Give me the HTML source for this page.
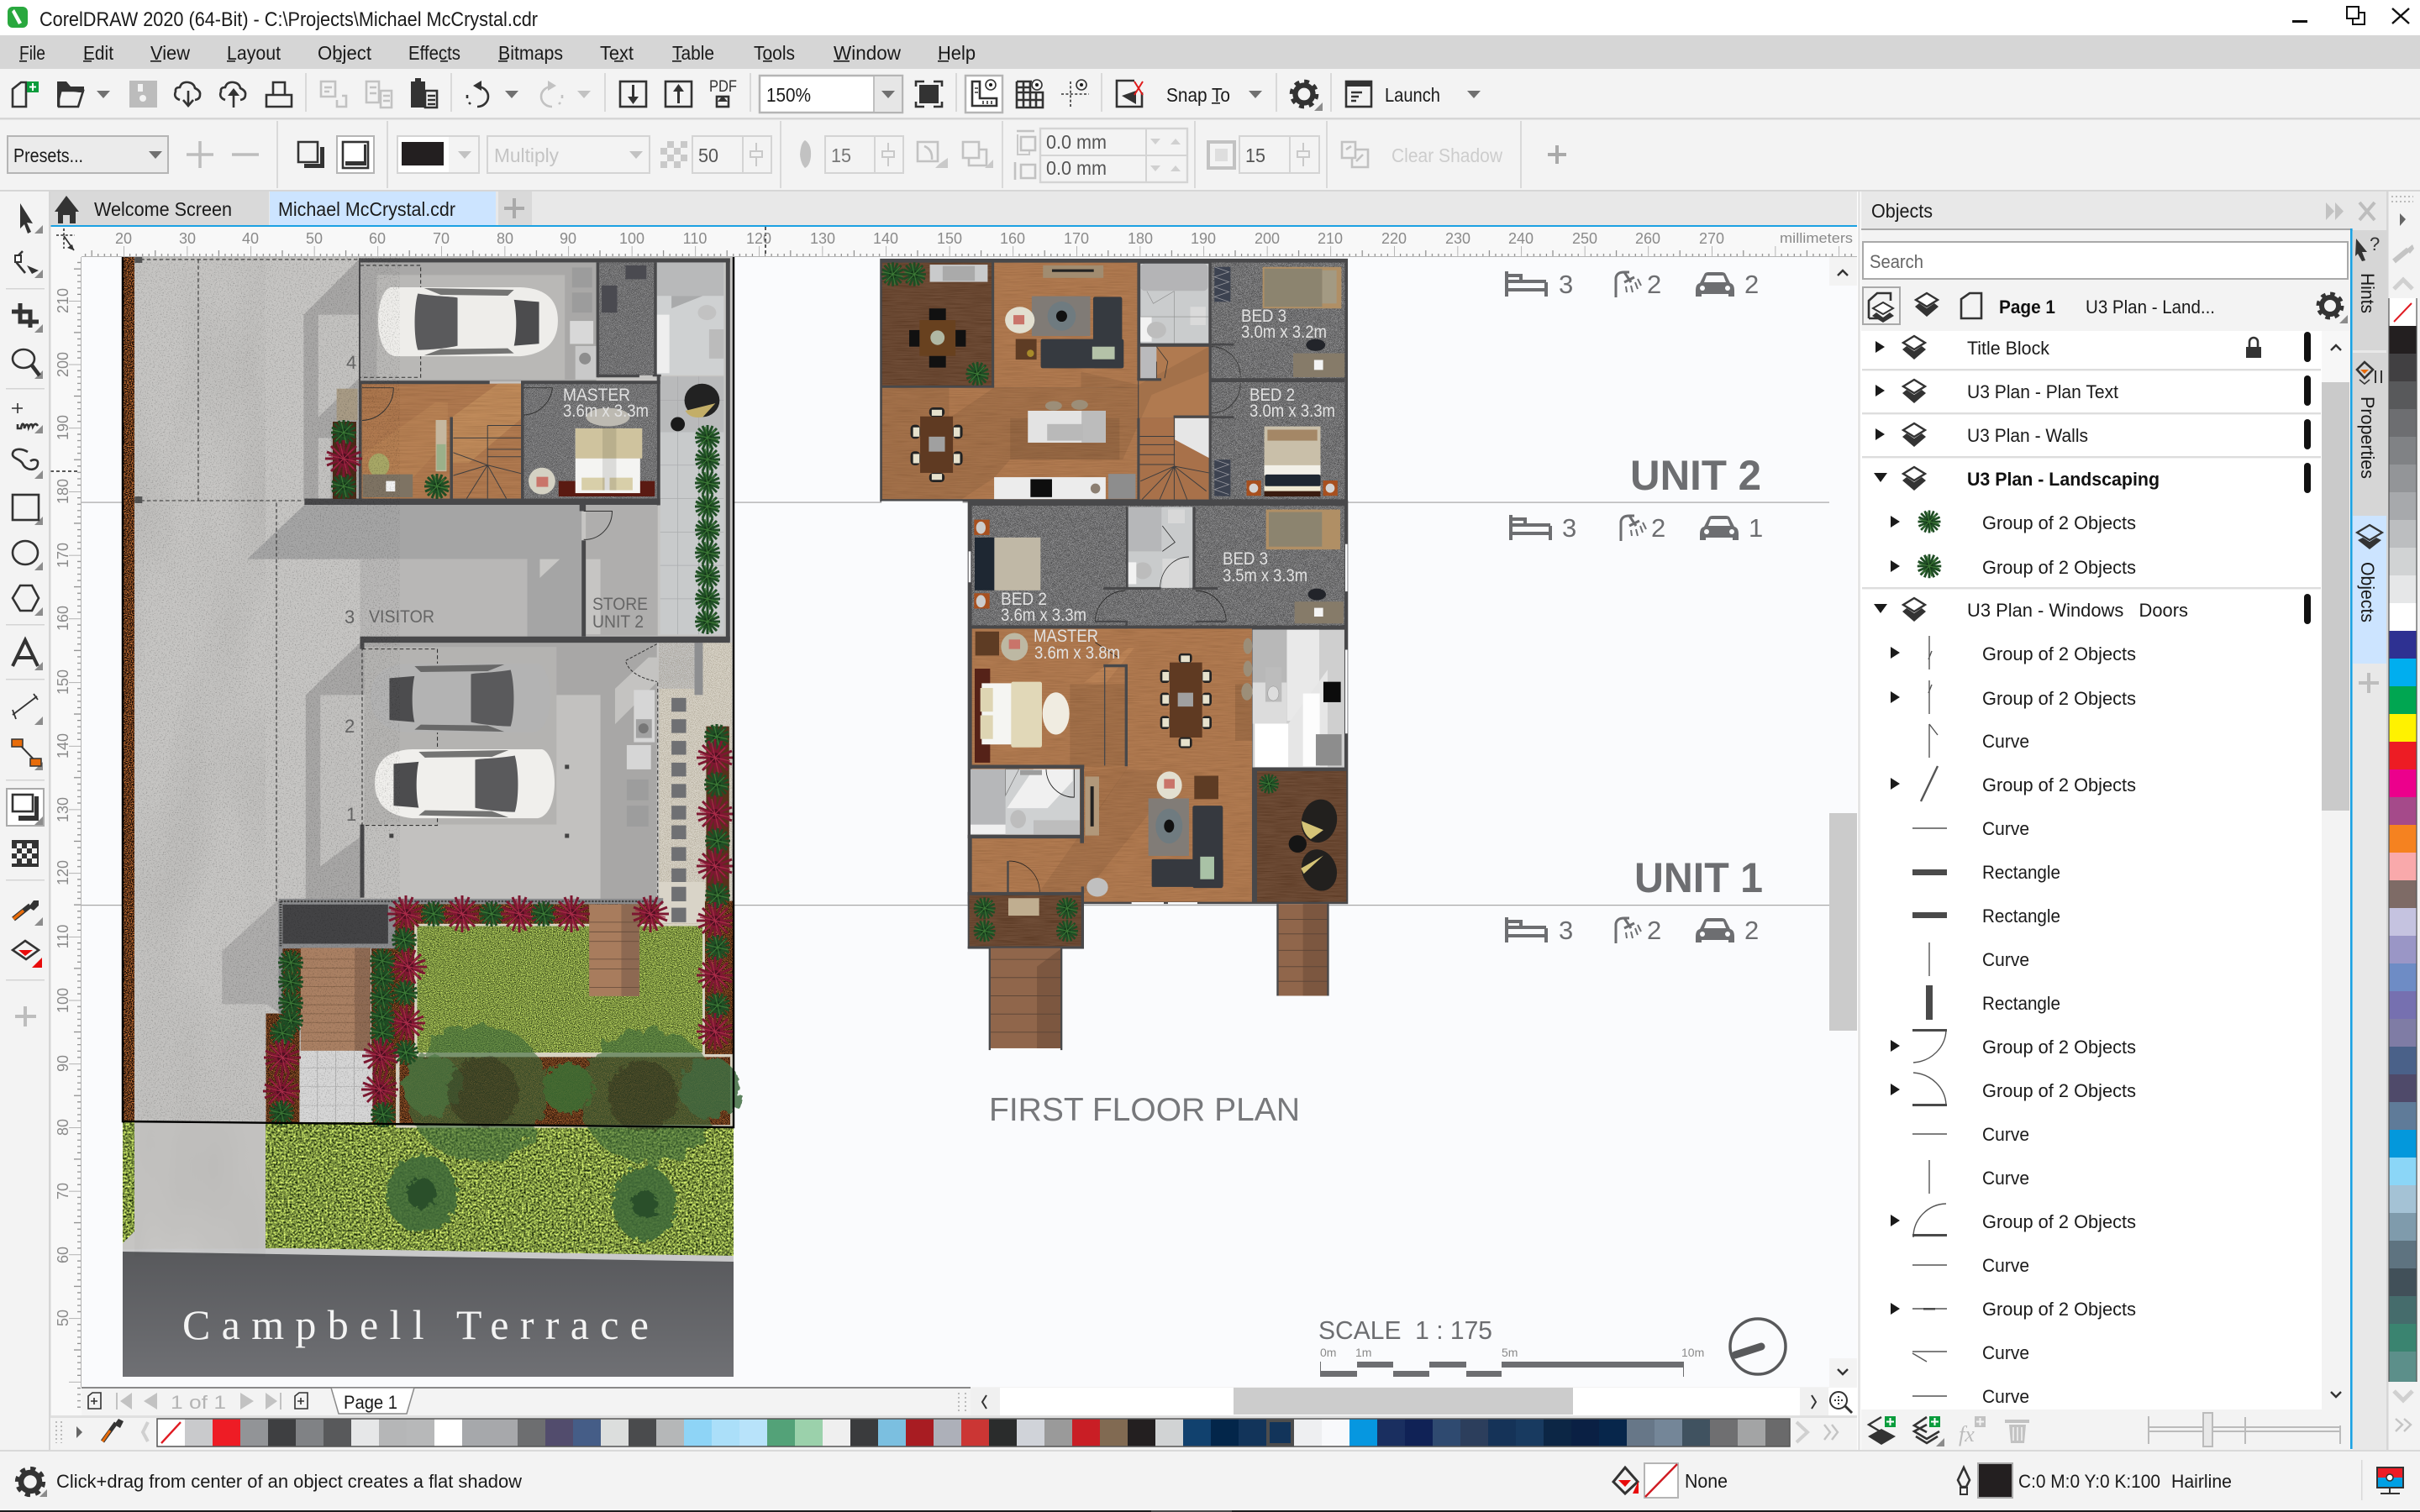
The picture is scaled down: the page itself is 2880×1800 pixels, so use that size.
<!DOCTYPE html>
<html><head><meta charset="utf-8"><title>CorelDRAW 2020</title>
<style>
html,body{margin:0;padding:0;background:#f3f3f3;overflow:hidden}
svg{display:block;font-family:"Liberation Sans",sans-serif;font-size:22px;fill:#1a1a1a}
.s{fill:none;stroke:#333;stroke-width:2.6}
.t{fill:none;stroke:#333;stroke-width:1.6}
.g{fill:none;stroke:#c2c2c2;stroke-width:2.6}
.d{fill:#333}
.dg{fill:#c2c2c2}
.tr{fill:#707070}
.r{fill:#8a8a8a;font-size:18px;text-anchor:middle}
.w{fill:#48484a}
.l{fill:#e2e2e2;font-size:21px}
</style></head><body>
<svg width="2880" height="1800" viewBox="0 0 2880 1800" xmlns="http://www.w3.org/2000/svg">
<defs>
<filter id="speck" x="0" y="0" width="100%" height="100%" color-interpolation-filters="sRGB"><feTurbulence type="fractalNoise" baseFrequency=".7" numOctaves="2" seed="3"/><feColorMatrix values="0 0 0 0 0 0 0 0 0 0 0 0 0 0 0 3.4 0 0 0 -1.8"/></filter>
<filter id="cloudy" x="0" y="0" width="100%" height="100%" color-interpolation-filters="sRGB"><feTurbulence type="fractalNoise" baseFrequency=".012 .004" numOctaves="2" seed="8"/><feColorMatrix values="0 0 0 0 0 0 0 0 0 0 0 0 0 0 0 1.6 0 0 0 -.62"/></filter>
<filter id="carpet" x="0" y="0" width="100%" height="100%" color-interpolation-filters="sRGB"><feTurbulence type="fractalNoise" baseFrequency="1.1" numOctaves="1" seed="5"/><feColorMatrix values="2.6 0 0 0 -.85 2.6 0 0 0 -.85 2.6 0 0 0 -.85 0 0 0 0 .38"/></filter>
<filter id="grass" x="0" y="0" width="100%" height="100%" color-interpolation-filters="sRGB"><feTurbulence type="fractalNoise" baseFrequency=".42" numOctaves="3" seed="11"/><feColorMatrix values="1.5 0 0 0 -.26 1.6 0 0 0 -.22 .8 0 0 0 -.15 0 0 0 0 1"/></filter>
<filter id="mulch" x="0" y="0" width="100%" height="100%" color-interpolation-filters="sRGB"><feTurbulence type="fractalNoise" baseFrequency=".8" numOctaves="2" seed="2"/><feColorMatrix values="2.2 0 0 0 -.72 1.3 0 0 0 -.44 .6 0 0 0 -.2 0 0 0 0 1"/></filter>
<filter id="grain" x="0" y="0" width="100%" height="100%" color-interpolation-filters="sRGB"><feTurbulence type="fractalNoise" baseFrequency=".012 .45" numOctaves="2" seed="6"/><feColorMatrix values="0 0 0 0 .2 0 0 0 0 .08 0 0 0 0 0 1.6 0 0 0 -.6"/></filter>
<filter id="gravel" x="0" y="0" width="100%" height="100%" color-interpolation-filters="sRGB"><feTurbulence type="fractalNoise" baseFrequency=".55" numOctaves="2" seed="9"/><feColorMatrix values="0 0 0 0 .35 0 0 0 0 .3 0 0 0 0 .2 2.4 0 0 0 -1.05"/></filter>
<filter id="leaf" x="-20%" y="-20%" width="140%" height="140%"><feTurbulence type="fractalNoise" baseFrequency=".07" numOctaves="3" seed="4" result="t"/><feDisplacementMap in="SourceGraphic" in2="t" scale="22"/></filter>
<filter id="leaf2" x="-30%" y="-30%" width="160%" height="160%"><feTurbulence type="fractalNoise" baseFrequency=".16" numOctaves="3" seed="7" result="t"/><feDisplacementMap in="SourceGraphic" in2="t" scale="14"/></filter>
<linearGradient id="road" x1="0" y1="0" x2="0" y2="1"><stop offset="0" stop-color="#58595c"/><stop offset="1" stop-color="#6f7074"/></linearGradient>
<pattern id="hr" x="147" y="290" width="75.6" height="16" patternUnits="userSpaceOnUse"><path d="M0 3V16M37.8 8V16M7.56 12V16M15.12 12V16M22.68 12V16M30.24 12V16M45.36 12V16M52.92 12V16M60.48 12V16M68.04 12V16" stroke="#8a8a8a" stroke-width="1.2" fill="none"/></pattern>
<pattern id="vr" x="80" y="358" width="16" height="75.7" patternUnits="userSpaceOnUse"><path d="M2 0H16M8 37.85H16M12 7.57H16M12 15.14H16M12 22.71H16M12 30.28H16M12 45.42H16M12 52.99H16M12 60.56H16M12 68.13H16" stroke="#8a8a8a" stroke-width="1.2" fill="none"/></pattern>
<clipPath id="cv"><rect x="97" y="306" width="2080" height="1345"/></clipPath>
<clipPath id="lst"><rect x="2215" y="394" width="548" height="1284"/></clipPath>
<g id="lay"><path d="M0-13L13-5L0 3L-13-5Z" fill="#fff" stroke="#333" stroke-width="2.4"/><path d="M-9-1L-14 3L0 15L14 3L9-1L0 5Z" fill="#333"/></g>
<g id="gear"><circle r="10" fill="none" stroke="#333" stroke-width="6"/><circle r="14" fill="none" stroke="#333" stroke-width="5" stroke-dasharray="5.5 5.5"/></g>
<path id="ar" d="M0-7L11 0L0 7Z" fill="#1a1a1a"/>
<path id="tri" d="M0 0L10-10V0Z" fill="#8c8c8c"/>
<g id="palm" fill="none" stroke="#1f4d24" stroke-width="3"><path d="M-15 0H15M0-15V15M-11-11L11 11M-11 11L11-11M-14-6L14 6M-14 6L14-6M-6-14L6 14M6-14L-6 14"/><circle r="5" fill="#16381a" stroke="none"/><path stroke="#3c7a36" stroke-width="1.2" d="M-13-3L13 3M-3-13L3 13M-9 9L9-9"/></g>
<g id="red" fill="none" stroke="#7d1731" stroke-width="3"><path d="M-22 0H22M0-22V22M-15-15L15 15M-15 15L15-15M-20-8L20 8M-20 8L20-8M-8-20L8 20M8-20L-8 20"/><circle r="6" fill="#4f1020" stroke="none"/><path stroke="#a82a48" stroke-width="1.2" d="M-18-4L18 4M-4-18L4 18M-12 12L12-12M-12-12L12 12"/></g>
<g id="car"><path d="M30 0H340C395 2 430 25 430 80C430 135 395 160 340 165H40C12 160 0 120 0 80C0 40 12 5 30 0Z" fill="currentColor"/><path d="M95 15C135 22 180 22 190 25V140C170 145 125 150 95 150C85 120 85 50 95 15Z" fill="#5a5a5c"/><path d="M325 30L385 35V135L325 140C332 110 332 60 325 30Z" fill="#4c4c4e"/><path d="M110 2L325 6L310 20L150 18ZM110 163L325 158L310 146L150 148Z" fill="#555" opacity=".8"/></g>
<g id="bed" fill="none" stroke="#6d6e71" stroke-width="4"><path d="M2-15V15M49-2V15M2 7H49M2-3H49M4-10H19V-3" /></g>
<g id="shw" fill="none" stroke="#6d6e71" stroke-width="3"><path d="M4 16V-7Q5-14 14-14L20-14M14-14L22-2M14-2L26-8" /><path stroke-width="2" d="M16 3L17 10M22 2L24 10M27-2L30 6M30-6L34 2"/></g>
<g id="crr"><path d="M1 8Q1 0 6-1L11-11Q12-14 16-14H32Q36-14 37-11L42-1Q47 0 47 8V15H40V12H8V15H1Z" fill="#6d6e71"/><path d="M14-10H34L37-2H11Z" fill="#fafbfd"/><circle cx="9" cy="5" r="3" fill="#fafbfd"/><circle cx="39" cy="5" r="3" fill="#fafbfd"/></g>
</defs>

<rect width="2880" height="1800" fill="#f3f3f3"/>
<!-- title bar -->
<rect width="2880" height="42" fill="#fff"/>
<rect x="9" y="8" width="24" height="25" rx="6" fill="#29a83e"/><path d="M17 11L26 27L22 29L14 14Z" fill="#fff"/>
<text x="47" y="31" font-size="24" textLength="593" lengthAdjust="spacingAndGlyphs">CorelDRAW 2020 (64-Bit) - C:\Projects\Michael McCrystal.cdr</text>
<rect x="2728" y="24" width="18" height="3" fill="#111"/>
<path d="M2793 8H2807V22H2793ZM2800 22V29H2814V15H2807" fill="none" stroke="#111" stroke-width="2"/>
<path d="M2847 10L2867 28M2867 10L2847 28" stroke="#111" stroke-width="2.4"/>
<!-- menu -->
<rect y="42" width="2880" height="40" fill="#d6d6d6"/>
<g font-size="23">
<text x="23" y="71" textLength="31" lengthAdjust="spacingAndGlyphs">File</text><rect x="23" y="72" width="9" height="1.6"/>
<text x="99" y="71" textLength="36" lengthAdjust="spacingAndGlyphs">Edit</text><rect x="99" y="72" width="10" height="1.6"/>
<text x="179" y="71" textLength="47" lengthAdjust="spacingAndGlyphs">View</text><rect x="179" y="72" width="13" height="1.6"/>
<text x="270" y="71" textLength="64" lengthAdjust="spacingAndGlyphs">Layout</text><rect x="270" y="72" width="10" height="1.6"/>
<text x="378" y="71" textLength="64" lengthAdjust="spacingAndGlyphs">Object</text><rect x="400" y="72" width="6" height="1.6"/>
<text x="486" y="71" textLength="62" lengthAdjust="spacingAndGlyphs">Effects</text><rect x="524" y="72" width="9" height="1.6"/>
<text x="593" y="71" textLength="77" lengthAdjust="spacingAndGlyphs">Bitmaps</text><rect x="593" y="72" width="11" height="1.6"/>
<text x="714" y="71" textLength="40" lengthAdjust="spacingAndGlyphs">Text</text><rect x="731" y="72" width="11" height="1.6"/>
<text x="800" y="71" textLength="50" lengthAdjust="spacingAndGlyphs">Table</text><rect x="800" y="72" width="11" height="1.6"/>
<text x="897" y="71" textLength="49" lengthAdjust="spacingAndGlyphs">Tools</text><rect x="908" y="72" width="11" height="1.6"/>
<text x="992" y="71" textLength="80" lengthAdjust="spacingAndGlyphs">Window</text><rect x="992" y="72" width="19" height="1.6"/>
<text x="1116" y="71" textLength="45" lengthAdjust="spacingAndGlyphs">Help</text><rect x="1116" y="72" width="13" height="1.6"/>
</g>
<!-- toolbar 1 -->
<rect y="140" width="2880" height="2.5" fill="#d6d6d6"/>
<g>
<path class="s" d="M15 127V106L25 98H31V127Z"/><rect x="32" y="97" width="14" height="13" fill="#0a9c3c"/><path d="M39 99V108M35 103.500H43" stroke="#fff" stroke-width="2"/>
<path class="d" d="M68 97H79L84 103H100V110H94L74 107L69 127H68Z"/><path class="s" d="M70 108H99L93 127H70Z"/>
<path class="tr" d="M115 108H131L123 117Z"/>
<rect x="154" y="96" width="33" height="32" fill="#bcbcbc"/><rect x="164" y="100" width="6" height="9" fill="#f3f3f3"/><circle cx="170" cy="117" r="4" fill="#f3f3f3"/>
<path class="s" d="M214 119Q206 116 209 109Q208 104 214 104Q216 97 224 98Q231 99 232 105Q239 108 238 113Q238 118 232 119M224 108V124M218 119L224 126L230 119"/>
<path class="s" d="M268 119Q260 116 263 109Q262 104 268 104Q270 97 278 98Q285 99 286 105Q293 108 292 113Q292 118 286 119M278 128V110"/><path class="d" d="M271 114L278 105L285 114Z"/>
<path class="s" d="M325 113V98H339V113M317 113H347V127H317Z"/>
<rect x="363" y="87" width="2" height="46" fill="#d9d9d9"/>
<path class="g" d="M382 97H399V115H382ZM386 104H395M386 109H392M401 119V127H412V114H407"/>
<path class="g" d="M436 97H451V122H436ZM453 108H466V128H453ZM440 104H448M440 111H448M456 114H464M456 120H464"/>
<rect x="489" y="97" width="17" height="31" class="d"/><rect x="494" y="93" width="7" height="5" class="d"/><path class="s" d="M506 108H520V128H506ZM509 114H518M509 119H518M509 124H518"/>
<rect x="536" y="87" width="2" height="46" fill="#d9d9d9"/>
<path class="s" d="M568 103A13 12 0 0 1 568 127M556 113V117M558 122L560 124" /><path class="d" d="M573 96V108L563 102Z"/>
<path class="tr" d="M601 108H617L609 117Z"/>
<path class="g" d="M657 103A13 12 0 0 0 657 127M669 113V117M667 122L665 124"/><path class="dg" d="M652 96V108L662 102Z"/>
<path d="M687 108H703L695 117Z" fill="#c2c2c2"/>
<rect x="719" y="87" width="2" height="46" fill="#d9d9d9"/>
<rect class="s" x="738" y="97" width="31" height="30"/><path class="d" d="M752 101H755V115H760L753.500 124L747 115H752Z"/>
<rect class="s" x="792" y="97" width="31" height="30"/><path class="d" d="M806 123H809V109H814L807.500 100L801 109H806Z"/>
<text x="844" y="109" font-size="19" textLength="33" lengthAdjust="spacingAndGlyphs" fill="#333">PDF</text>
<rect class="s" x="853" y="115" width="14" height="12"/><path class="d" d="M860 114L866 121H854Z"/>
<rect x="892" y="87" width="2" height="46" fill="#d9d9d9"/>
<rect x="904" y="90" width="170" height="44" fill="#fff" stroke="#b5b5b5" stroke-width="2.500"/><rect x="1040" y="91" width="33" height="42" fill="#e6e6e6"/><rect x="1039" y="91" width="2" height="42" fill="#c0c0c0"/>
<path class="tr" d="M1049 108H1065L1057 117Z"/>
<text x="912" y="121" font-size="23" textLength="53" lengthAdjust="spacingAndGlyphs">150%</text>
<path class="s" d="M1090 103V97H1100M1111 97H1121V103M1121 121V127H1111M1100 127H1090V121"/><rect x="1094" y="101" width="23" height="22" class="d"/>
<rect x="1137" y="87" width="2" height="46" fill="#d9d9d9"/>
<rect x="1149" y="90" width="44" height="44" fill="#fff" stroke="#b5b5b5" stroke-width="2.500"/>
<path class="s" d="M1157 97V126H1186V117H1166V97Z"/><circle class="t" cx="1179" cy="101" r="6"/><circle cx="1179" cy="101" r="2"/>
<path class="t" d="M1160 105H1164M1160 110H1164M1170 120V124M1175 120V124M1180 120V124"/>
<path class="s" d="M1210 97H1228M1210 97V128H1241V110H1210M1210 104H1226M1210 119H1241M1218 97V128M1226 97V128M1233 110V128"/><circle class="t" cx="1234" cy="101" r="6"/><circle cx="1234" cy="101" r="2"/>
<path class="t" d="M1274 97V128M1263 112H1296" stroke-dasharray="3 2.4"/><circle class="t" cx="1287" cy="101" r="6"/><circle cx="1287" cy="101" r="2"/>
<rect x="1310" y="87" width="2" height="46" fill="#d9d9d9"/>
<path class="s" d="M1350 96H1329V127H1359V110"/><path class="d" d="M1352 108V124L1335 114Z"/><path d="M1350 97L1360 113M1360 97L1350 113" stroke="#e01a1a" stroke-width="2"/>
<text x="1388" y="121" font-size="23" textLength="76" lengthAdjust="spacingAndGlyphs">Snap To</text><rect x="1442" y="122" width="10" height="1.600"/>
<path class="tr" d="M1486 108H1502L1494 117Z"/>
<rect x="1518" y="87" width="2" height="46" fill="#d9d9d9"/>
<use href="#gear" transform="translate(1552,112) scale(1.050)"/><path d="M1564 132L1574 122V132Z" fill="#8c8c8c"/>
<rect x="1583" y="87" width="2" height="46" fill="#d9d9d9"/>
<rect class="s" x="1602" y="97" width="30" height="30"/><rect x="1602" y="97" width="30" height="6" class="d"/><path class="s" d="M1608 110H1621M1608 115H1617M1608 120H1614"/>
<text x="1648" y="121" font-size="23" textLength="66" lengthAdjust="spacingAndGlyphs">Launch</text>
<path class="tr" d="M1746 108H1762L1754 117Z"/>
</g>
<!-- toolbar 2 -->
<rect y="226" width="2880" height="2.500" fill="#d6d6d6"/>
<g fill="#d9d9d9"><rect x="329" y="144" width="2" height="80"/><rect x="460" y="144" width="2" height="80"/><rect x="928" y="144" width="2" height="80"/><rect x="1192" y="144" width="2" height="80"/><rect x="1421" y="144" width="2" height="80"/><rect x="1578" y="144" width="2" height="80"/><rect x="1809" y="144" width="2" height="80"/></g>
<rect x="9" y="162" width="191" height="44" fill="#ebebeb" stroke="#b5b5b5" stroke-width="2"/>
<text x="16" y="193" font-size="23" textLength="83" lengthAdjust="spacingAndGlyphs">Presets...</text>
<path class="tr" d="M177 180H193L185 189Z"/>
<path d="M238 168V200M222 184H254M276 184H308" stroke="#bdbdbd" stroke-width="3.500"/>
<path class="s" d="M355 169H378V193H355Z"/><path class="d" d="M381 175H386V200H362V195H381Z"/>
<rect x="401" y="162" width="44" height="44" fill="#fff" stroke="#b5b5b5" stroke-width="2"/>
<rect class="s" x="408" y="169" width="30" height="31"/><path class="d" d="M433 172H436V197H411V192H433Z"/>
<rect x="473" y="162" width="97" height="44" fill="#f3f3f3" stroke="#d4d4d4" stroke-width="2"/><rect x="474" y="163" width="60" height="42" fill="#fff"/>
<rect x="478" y="169" width="50" height="28" fill="#231f20"/>
<path d="M545 180H561L553 189Z" fill="#c2c2c2"/>
<rect x="580" y="162" width="193" height="44" fill="#f3f3f3" stroke="#d4d4d4" stroke-width="2"/>
<text x="588" y="193" font-size="23" textLength="77" lengthAdjust="spacingAndGlyphs" fill="#c4c4c4">Multiply</text>
<path d="M749 180H765L757 189Z" fill="#c2c2c2"/>
<rect x="786" y="168" width="32" height="32" fill="#c9c9c9"/><path d="M786 168h8v8h-8zM802 168h8v8h-8zM794 176h8v8h-8zM810 176h8v8h-8zM786 184h8v8h-8zM802 184h8v8h-8zM794 192h8v8h-8zM810 192h8v8h-8z" fill="#f3f3f3"/>
<rect x="824" y="162" width="94" height="44" fill="#f3f3f3" stroke="#d4d4d4" stroke-width="2"/><rect x="883" y="162" width="2" height="44" fill="#d4d4d4"/>
<text x="831" y="193" font-size="23" textLength="24" lengthAdjust="spacingAndGlyphs" fill="#555">50</text>
<path d="M900 170V198" stroke="#c9c9c9" stroke-width="2"/><rect x="893" y="180" width="14" height="7" fill="#f3f3f3" stroke="#c9c9c9" stroke-width="2"/>
<path d="M952 184Q953 170 958 167Q966 172 965 186Q964 197 958 200Q953 195 952 184Z" fill="#c2c2c2"/>
<rect x="982" y="162" width="93" height="44" fill="#f3f3f3" stroke="#d4d4d4" stroke-width="2"/><rect x="1040" y="162" width="2" height="44" fill="#d4d4d4"/>
<text x="989" y="193" font-size="23" textLength="24" lengthAdjust="spacingAndGlyphs" fill="#777">15</text>
<path d="M1057 170V198" stroke="#c9c9c9" stroke-width="2"/><rect x="1050" y="180" width="14" height="7" fill="#f3f3f3" stroke="#c9c9c9" stroke-width="2"/>
<path class="g" d="M1092 169H1116V192H1092ZM1100 174Q1110 178 1109 190"/><path d="M1113 200H1128V188L1118 195Z" fill="#c9c9c9"/>
<path class="g" d="M1146 169H1165V188H1146ZM1165 178H1174V197H1153V188"/><path d="M1172 200L1182 190V200Z" fill="#c9c9c9"/>
<path class="g" d="M1215 163H1232V179H1215ZM1210 156H1231"/><path d="M1225 180V184H1211V160" fill="none" stroke="#c9c9c9" stroke-width="2"/>
<path class="g" d="M1215 196H1232V212H1215ZM1208 193V214"/>
<rect x="1238" y="153" width="175" height="64" fill="#f3f3f3" stroke="#d4d4d4" stroke-width="2.400"/><rect x="1238" y="184" width="175" height="2" fill="#d4d4d4"/><rect x="1363" y="153" width="2" height="64" fill="#d4d4d4"/>
<text x="1245" y="177" font-size="23" textLength="72" lengthAdjust="spacingAndGlyphs" fill="#555">0.0 mm</text>
<text x="1245" y="208" font-size="23" textLength="72" lengthAdjust="spacingAndGlyphs" fill="#555">0.0 mm</text>
<path d="M1369 165H1381L1375 172ZM1393 172H1405L1399 165ZM1369 197H1381L1375 204ZM1393 204H1405L1399 197Z" fill="#d0d0d0"/>
<rect x="1438" y="169" width="31" height="31" fill="none" stroke="#c2c2c2" stroke-width="4"/><rect x="1446" y="177" width="15" height="15" fill="#dedede"/>
<rect x="1475" y="162" width="95" height="44" fill="#f3f3f3" stroke="#d4d4d4" stroke-width="2"/><rect x="1534" y="162" width="2" height="44" fill="#d4d4d4"/>
<text x="1482" y="193" font-size="23" textLength="24" lengthAdjust="spacingAndGlyphs" fill="#555">15</text>
<path d="M1551 170V198" stroke="#c9c9c9" stroke-width="2"/><rect x="1544" y="180" width="14" height="7" fill="#f3f3f3" stroke="#c9c9c9" stroke-width="2"/>
<path class="g" d="M1597 169H1613V188H1597ZM1613 178H1628V199H1609V188M1602 178L1608 174M1614 192L1622 184"/>
<text x="1656" y="193" font-size="23" textLength="132" lengthAdjust="spacingAndGlyphs" fill="#cdcdcd">Clear Shadow</text>
<path d="M1853 173V195M1842 184H1864" stroke="#a9a9a9" stroke-width="4"/>

<!-- tab bar -->
<rect x="60" y="228" width="2150" height="40" fill="#e8e8e8"/>
<rect x="59" y="228" width="261" height="40" fill="#d9d9d9"/>
<path class="d" d="M79 233L94 252H90V266H83V256H75V266H69V252H65Z"/>
<text x="112" y="257" font-size="23" textLength="164" lengthAdjust="spacingAndGlyphs">Welcome Screen</text>
<rect x="321" y="228" width="269" height="40" fill="#cce4ff"/>
<text x="331" y="257" font-size="23" textLength="211" lengthAdjust="spacingAndGlyphs">Michael McCrystal.cdr</text>
<rect x="593" y="228" width="40" height="40" fill="#d9d9d9"/>
<path d="M612 236V260M600 248H624" stroke="#a9a9a9" stroke-width="4"/>
<rect x="60" y="268" width="2150" height="2.500" fill="#1ba1e2"/>

<!-- canvas -->
<rect x="97" y="306" width="2080" height="1345" fill="#fafbfd"/>
<g clip-path="url(#cv)">
<rect x="97" y="597.500" width="2080" height="1.200" fill="#a6a6a6"/>
<rect x="97" y="1077" width="2080" height="1.200" fill="#a6a6a6"/>
<!-- left site -->
<rect x="146" y="306" width="14" height="1030" filter="url(#mulch)"/>
<rect x="160" y="306" width="712" height="1030" fill="#c6c5c3"/>
<rect x="146" y="1336" width="14" height="150" fill="#7f9443"/>
<rect x="146" y="1336" width="14" height="146" filter="url(#grass)"/>
<polygon points="160,1336 316,1336 316,1470 345,1497 146,1492 146,1480 160,1466" fill="#c6c5c3"/>
<rect x="316" y="1336" width="557" height="160" filter="url(#grass)"/>
<polygon points="345,1486 873,1495 873,1503 146,1490 146,1487" fill="#c9c9ca"/>
<polygon points="146,1490 873,1502 873,1639 146,1639" fill="url(#road)"/>
<rect x="160" y="306" width="156" height="1190" filter="url(#cloudy)" opacity=".07"/>
<g transform="translate(130,300) scale(.4975)">
<polygon points="600,15 465,150 465,595 600,595" fill="#a8a7a6"/>
<polygon points="500,150 600,150 600,300 500,395" fill="#c3c2c0"/>
<rect x="500" y="445" width="30" height="145" fill="#c3c2c0"/>
<rect x="600" y="25" width="565" height="285" fill="#a9a8a7"/>
<rect x="640" y="55" width="450" height="250" fill="#b9b8b6"/>
<rect x="1107" y="37" width="48" height="48" fill="#9c9c9c"/><rect x="1107" y="97" width="48" height="48" fill="#9c9c9c"/>
<rect x="1102" y="165" width="56" height="55" fill="#d8d8d8"/><rect x="1115" y="225" width="50" height="80" fill="#c9c9c9"/><circle cx="1138" cy="255" r="14" fill="#8d8d8d"/>
<rect x="1170" y="25" width="135" height="270" fill="#6e6e70"/><rect x="1170" y="25" width="135" height="270" filter="url(#carpet)"/>
<path d="M1178 80H1215V145H1178ZM1235 32H1285V65H1235Z" fill="#4a4a50"/>
<rect x="1310" y="25" width="160" height="270" fill="#cfd1d2"/><rect x="1310" y="25" width="160" height="80" fill="#b8b9ba"/>
<polygon points="1345,135 1420,105 1345,105" fill="#a9aaab"/><rect x="1307" y="150" width="33" height="140" fill="#eee"/><ellipse cx="1430" cy="145" rx="22" ry="18" fill="#c2c2c2"/><rect x="1435" y="185" width="35" height="70" fill="#bbb"/>
<rect x="1318" y="298" width="152" height="617" fill="#c8cacb"/>
<path d="M1360 298V915M1410 298V915M1318 355H1470M1318 430H1470M1318 510H1470M1318 590H1470M1318 670H1470M1318 750H1470M1318 830H1470" stroke="#aaacae" stroke-width="1.500" fill="none"/>
<rect x="1318" y="298" width="152" height="130" fill="#a9aaab" opacity=".5"/>
<ellipse cx="1418" cy="355" rx="42" ry="40" fill="#222"/><path d="M1378 380L1450 362L1420 395Q1390 400 1378 380Z" fill="#c3ae68"/><circle cx="1360" cy="412" r="17" fill="#1a1a1a"/>
<rect x="600" y="315" width="390" height="275" fill="#b07a50"/>
<polygon points="820,395 930,315 990,315 990,395 860,505 820,505" fill="#bf8a5a"/>
<polygon points="605,485 780,360 810,360 810,450 680,590 605,590" fill="#ba8456" opacity=".7"/>
<rect x="600" y="315" width="390" height="275" filter="url(#grain)" opacity=".18"/>
<path d="M823 445H905V590M905 415V590M905 415H985M905 445H985M905 472H985M905 490H985M905 510L823 480M905 510L823 535M905 510L855 590M905 510L905 590M905 510L950 590M905 510L985 530" fill="none" stroke="#3d3d3f" stroke-width="2"/>
<rect x="544" y="327" width="50" height="76" fill="#a89b85"/>
<rect x="781" y="402" width="26" height="123" fill="#c5b79f"/><rect x="783" y="460" width="22" height="62" fill="#9bb08a"/>
<ellipse cx="645" cy="510" rx="25" ry="28" fill="#a7a766"/>
<rect x="606" y="532" width="120" height="55" fill="#7e7363"/><rect x="662" y="548" width="22" height="25" fill="#f2f2f2"/>
<rect x="990" y="315" width="320" height="275" fill="#717173"/><rect x="990" y="315" width="320" height="275" filter="url(#carpet)"/>
<ellipse cx="1193" cy="395" rx="52" ry="22" fill="#bdbab2"/>
<rect x="1075" y="548" width="230" height="37" fill="#5a1a12"/><rect x="1115" y="422" width="155" height="155" fill="#f4f4f2"/><rect x="1115" y="422" width="160" height="72" fill="#cfc39e"/><rect x="1130" y="540" width="55" height="30" fill="#d8cfa9"/><rect x="1197" y="540" width="55" height="30" fill="#d8cfa9"/><rect x="1180" y="420" width="33" height="150" fill="#000" opacity=".1"/>
<ellipse cx="1035" cy="548" rx="32" ry="32" fill="#d4d1c3"/><rect x="1022" y="538" width="28" height="24" fill="#c9746a"/>
<rect x="1168" y="295" width="100" height="5" class="w"/>
<polygon points="467,605 1130,605 1130,920 1000,920 1000,735 330,735" fill="#a5a5a5"/>
<rect x="600" y="735" width="400" height="185" fill="#b8b7b6"/>
<polygon points="1030,735 1078,735 1030,780" fill="#c8c7c5"/>
<rect x="1140" y="605" width="172" height="313" fill="#afaead"/><rect x="1140" y="735" width="35" height="180" fill="#c6c5c3"/>
<polygon points="600,935 1310,935 1310,1568 470,1568 470,1060" fill="#a8a7a6"/>
<polygon points="505,1060 600,1060 600,1400 505,1470" fill="#c2c1bf"/>
<rect x="600" y="1060" width="575" height="490" fill="#c2c1bf"/>
<rect x="610" y="945" width="460" height="425" fill="#b4b3b1"/>
<polygon points="1210,1045 1290,970 1400,970 1400,1030 1310,1030 1210,1130" fill="#c4c3c1"/>
<rect x="1255" y="1048" width="50" height="125" fill="#d6d6d6"/><rect x="1260" y="1118" width="38" height="45" fill="#a2a2a2"/><circle cx="1278" cy="1140" r="12" fill="#777"/>
<rect x="1238" y="1180" width="58" height="58" fill="#d6d6d6"/><rect x="1238" y="1262" width="52" height="50" fill="#9d9d9d"/><rect x="1238" y="1325" width="52" height="50" fill="#9d9d9d"/>
<polygon points="1315,1045 1410,1045 1420,935 1490,935 1490,1568 1315,1568" fill="#d9d4c8"/>
<rect x="1315" y="935" width="175" height="635" filter="url(#gravel)" opacity=".5"/>
<rect x="1400" y="935" width="20" height="125" fill="#8d8e90"/>
<g fill="#6f7073"><rect x="1345" y="1067" width="35" height="33"/><rect x="1345" y="1118" width="35" height="33"/><rect x="1345" y="1170" width="35" height="33"/><rect x="1345" y="1222" width="35" height="33"/><rect x="1345" y="1273" width="35" height="33"/><rect x="1345" y="1325" width="35" height="33"/><rect x="1345" y="1372" width="35" height="33"/><rect x="1345" y="1424" width="35" height="33"/><rect x="1345" y="1475" width="35" height="33"/><rect x="1345" y="1522" width="35" height="33"/></g>
<rect x="1428" y="1135" width="55" height="433" fill="#56321b"/>
<g class="w">
<rect x="600" y="15" width="885" height="10"/><rect x="1475" y="15" width="10" height="915"/><rect x="1165" y="25" width="7" height="275"/><rect x="1303" y="25" width="7" height="270"/>
<rect x="597" y="308" width="313" height="8"/><rect x="985" y="308" width="333" height="8"/><rect x="597" y="15" width="4" height="300"/><rect x="597" y="315" width="7" height="280"/><rect x="985" y="315" width="7" height="275"/><rect x="815" y="395" width="7" height="195"/>
<rect x="1310" y="296" width="8" height="310"/><rect x="467" y="590" width="851" height="15"/>
<rect x="600" y="920" width="885" height="15"/><rect x="1130" y="690" width="10" height="230"/><rect x="1125" y="605" width="15" height="15"/>
<rect x="600" y="1370" width="10" height="175"/><rect x="600" y="925" width="10" height="25"/><rect x="1168" y="293" width="100" height="5"/><rect x="1300" y="293" width="20" height="5"/>
</g>
<g fill="none" stroke="#333" stroke-width="2">
<path d="M605 325H680V325A78 78 0 0 1 605 403"/><path d="M992 325H1060A72 72 0 0 1 992 390"/><path d="M1135 620H1203A65 68 0 0 1 1135 688"/><path stroke-dasharray="7 4" d="M1310 938L1235 978Q1245 1015 1310 1028"/>
<path stroke-dasharray="9 6" stroke-width="2.200" d="M60 18H600M213 18V595M60 595H465M400 600V1568M605 950H785V1372H605V950M600 32H745V300H600M1312 1030V1568"/>
</g>
<rect x="61" y="12" width="18" height="14" fill="#555"/><rect x="61" y="585" width="18" height="16" fill="#555"/>
<g fill="#444"><rect x="1090" y="1227" width="10" height="10"/><rect x="670" y="1392" width="10" height="10"/><rect x="1090" y="1392" width="10" height="10"/></g>
</g>
<use href="#car" transform="translate(450,342) scale(.4975)" color="#eeedea"/>
<use href="#car" transform="translate(655,790) scale(-.4975,.4975)" color="#b3b3b3"/>
<use href="#car" transform="translate(660,892) scale(-.4975,.4975)" color="#f0efec"/>
<text x="412" y="439" font-size="22" fill="#666">4</text>
<text x="410" y="742" font-size="22" fill="#666">3</text>
<text x="439" y="741" font-size="21" fill="#666" textLength="78" lengthAdjust="spacingAndGlyphs">VISITOR</text>
<text x="705" y="726" font-size="21" fill="#666" textLength="66" lengthAdjust="spacingAndGlyphs">STORE</text>
<text x="705" y="747" font-size="21" fill="#666" textLength="61" lengthAdjust="spacingAndGlyphs">UNIT 2</text>
<text x="410" y="872" font-size="22" fill="#666">2</text>
<text x="412" y="977" font-size="22" fill="#666">1</text>
<text x="670" y="477" class="l" textLength="80" lengthAdjust="spacingAndGlyphs">MASTER</text>
<text x="670" y="496" class="l" textLength="102" lengthAdjust="spacingAndGlyphs">3.6m x 3.3m</text>
<!-- left lower -->
<g transform="translate(130,1050) scale(.4975,.3827)">
<polygon points="405,55 270,215 270,380 375,380 405,405" fill="#aeadac"/>
<rect x="375" y="410" width="80" height="340" filter="url(#mulch)"/>
<rect x="415" y="205" width="45" height="210" filter="url(#mulch)"/>
<rect x="628" y="205" width="60" height="545" filter="url(#mulch)"/>
<rect x="405" y="52" width="280" height="155" fill="#8b8c8e"/><rect x="405" y="55" width="10" height="355" fill="#8b8c8e"/>
<rect x="415" y="70" width="252" height="122" fill="#434345"/>
<rect x="458" y="205" width="167" height="320" fill="#aa8063"/><rect x="587" y="205" width="38" height="320" fill="#8f6b54"/>
<path d="M458 240H625M458 268H625M458 296H625M458 325H625M458 355H625M458 382H625M458 410H625M458 437H625M458 468H625M458 495H625" stroke="#846249" stroke-width="2"/>
<rect x="455" y="525" width="175" height="222" fill="#d6d6d6"/><path d="M498 525V747M542 525V747M586 525V747M455 578H630M455 636H630M455 695H630" stroke="#a8a8a8" stroke-width="1.500"/>
<rect x="685" y="60" width="810" height="700" filter="url(#mulch)"/>
<rect x="730" y="130" width="695" height="410" fill="#d7d2c2"/><rect x="690" y="540" width="800" height="220" fill="none" stroke="#d7d2c2" stroke-width="9"/>
<rect x="737" y="138" width="682" height="392" filter="url(#grass)"/>
<rect x="1148" y="70" width="120" height="285" fill="#a87c5d"/><rect x="1225" y="70" width="43" height="285" fill="#8d6952"/>
<path d="M1148 125H1268M1148 155H1268M1148 185H1268M1148 240H1268M1148 270H1268M1148 328H1268" stroke="#634a3a" stroke-width="2"/>
<rect x="1315" y="0" width="110" height="130" fill="#d9d4c8"/><rect x="1345" y="15" width="35" height="45" fill="#6f7073"/><rect x="1345" y="80" width="35" height="45" fill="#6f7073"/>
<rect x="1310" y="50" width="15" height="20" fill="#8b8c8e"/>
<rect x="685" y="52" width="630" height="17" fill="#8b8c8e"/><path d="M410 60H1310M410 60V200" stroke="#444" stroke-width="6" stroke-dasharray="5 3" fill="none"/>
</g>
<g>
<g opacity=".85"><g filter="url(#leaf)"><ellipse cx="568" cy="1300" rx="84" ry="82" fill="#3f6b3a" opacity=".72"/><ellipse cx="772" cy="1305" rx="82" ry="80" fill="#3f6b3a" opacity=".72"/><circle cx="515" cy="1292" r="36" fill="#47743f"/><circle cx="845" cy="1296" r="36" fill="#3f6e42"/></g>
<g filter="url(#leaf2)"><circle cx="676" cy="1295" r="30" fill="#3e7036"/><circle cx="575" cy="1300" r="42" fill="#2a2a17" opacity=".4"/><circle cx="765" cy="1305" r="42" fill="#2a2a17" opacity=".4"/></g></g>
<g filter="url(#leaf2)"><ellipse cx="502" cy="1421" rx="42" ry="46" fill="#3d6a38" opacity=".88"/><ellipse cx="767" cy="1433" rx="38" ry="44" fill="#3d6a38" opacity=".88"/><circle cx="502" cy="1421" r="18" fill="#2a4f2a"/><circle cx="767" cy="1433" r="16" fill="#2a4f2a"/></g>
</g>
<g>
<use href="#palm" x="842" y="521"/><use href="#palm" x="842" y="547"/><use href="#palm" x="842" y="575"/><use href="#palm" x="842" y="603"/><use href="#palm" x="842" y="631"/><use href="#palm" x="842" y="658"/><use href="#palm" x="842" y="686"/><use href="#palm" x="842" y="713"/><use href="#palm" x="842" y="740"/>
<rect x="396" y="502" width="28" height="92" fill="#4c2a18"/>
<use href="#palm" x="409" y="515"/><use href="#palm" x="409" y="579"/><use href="#red" x="409" y="546"/><use href="#palm" x="520" y="579"/>
<use href="#palm" x="853" y="877"/><use href="#red" x="851" y="902"/><use href="#palm" x="853" y="934"/><use href="#red" x="851" y="969"/><use href="#palm" x="854" y="1001"/><use href="#red" x="851" y="1031"/><use href="#palm" x="854" y="1066"/>
<use href="#red" x="483" y="1088"/><use href="#palm" x="516" y="1088"/><use href="#red" x="550" y="1088"/><use href="#palm" x="585" y="1088"/><use href="#red" x="618" y="1088"/><use href="#palm" x="647" y="1088"/><use href="#red" x="680" y="1088"/><use href="#red" x="774" y="1088"/>
<use href="#red" x="851" y="1096"/><use href="#palm" x="854" y="1128"/><use href="#red" x="851" y="1161"/><use href="#palm" x="854" y="1197"/><use href="#red" x="851" y="1228"/>
<use href="#palm" x="481" y="1119"/><use href="#red" x="486" y="1151"/><use href="#palm" x="482" y="1182"/><use href="#red" x="484" y="1218"/><use href="#palm" x="483" y="1253"/>
<use href="#palm" x="346" y="1146"/><use href="#palm" x="346" y="1169"/><use href="#palm" x="346" y="1194"/><use href="#palm" x="346" y="1215"/><use href="#palm" x="336" y="1230"/><use href="#red" x="336" y="1259"/><use href="#red" x="335" y="1299"/><use href="#palm" x="335" y="1325"/>
<use href="#palm" x="455" y="1144"/><use href="#palm" x="455" y="1165"/><use href="#palm" x="455" y="1188"/><use href="#palm" x="455" y="1211"/><use href="#palm" x="455" y="1230"/><use href="#red" x="453" y="1257"/><use href="#red" x="452" y="1297"/><use href="#palm" x="456" y="1327"/>
</g>
<rect x="160" y="306" width="316" height="1030" filter="url(#speck)" opacity=".22"/>
<path d="M146 306V1335L873 1342V306" fill="none" stroke="#000" stroke-width="2.400"/>
<text x="217" y="1594" font-family="Liberation Serif,serif" font-size="50" fill="#f4f4f4" textLength="555">Campbell Terrace</text>

<!-- right plan upper -->
<g transform="translate(1030,300) scale(.3827,.3954)">
<rect x="45" y="20" width="1455" height="732" class="w"/>
<rect x="52" y="32" width="343" height="370" fill="#6e4c36"/>
<rect x="52" y="408" width="795" height="336" fill="#b07a50"/><rect x="400" y="32" width="447" height="376" fill="#b07a50"/><rect x="850" y="285" width="218" height="215" fill="#b07a50"/>
<polygon points="670,360 670,408 400,408 260,500 260,408 250,408 52,408 52,744 300,744 400,680 450,625 800,625 890,430 1068,360 1068,285 850,400" fill="#000" opacity=".07"/>
<rect x="450" y="500" width="340" height="125" fill="#000" opacity=".08"/>
<rect x="52" y="408" width="795" height="336" filter="url(#grain)" opacity=".18"/><rect x="400" y="32" width="447" height="376" filter="url(#grain)" opacity=".18"/>
<rect x="52" y="32" width="343" height="370" filter="url(#grain)" opacity=".45"/>
<rect x="850" y="500" width="218" height="245" fill="#a8714a"/><polygon points="962,500 1068,500 1068,620 962,565" fill="#e6e6e6"/>
<path d="M850 555H962M850 580H962M850 610H962M850 640H962M960 500V745M960 645L855 690M960 645L860 745M960 645L915 745M960 645L1000 745M960 645L1060 720M960 645L1068 665" stroke="#3d3d3f" stroke-width="2.500" fill="none"/>
<rect x="855" y="35" width="212" height="240" fill="#cacccd"/><rect x="855" y="35" width="210" height="82" rx="14" fill="#b4b4b6"/><rect x="855" y="195" width="35" height="75" fill="#f2f2f2"/><ellipse cx="905" cy="235" rx="30" ry="25" fill="#bdbdbd"/><rect x="1010" y="165" width="48" height="55" fill="#dadada"/>
<path d="M875 118L895 155L960 118M855 195H1068M960 118V275" stroke="#8a8a8a" stroke-width="1.500" fill="none"/>
<rect x="855" y="285" width="50" height="97" fill="#bababc"/>
<rect x="1075" y="32" width="415" height="348" fill="#6e6e70"/><rect x="1075" y="392" width="415" height="352" fill="#6e6e70"/>
<rect x="1075" y="32" width="415" height="712" filter="url(#carpet)"/>
<rect x="1235" y="45" width="245" height="125" fill="#b08f65"/><rect x="1240" y="50" width="180" height="115" fill="#8c846f"/><rect x="1420" y="55" width="45" height="100" fill="#a39a83"/>
<rect x="1330" y="305" width="160" height="72" fill="#867b69"/><rect x="1395" y="325" width="28" height="30" fill="#f4f4f4"/><ellipse cx="1400" cy="280" rx="30" ry="18" fill="#22242a"/>
<rect x="1240" y="525" width="175" height="210" fill="#c9bfa9"/><rect x="1250" y="535" width="155" height="33" fill="#a48766"/><rect x="1240" y="642" width="175" height="30" fill="#f2f0e8"/><rect x="1242" y="670" width="173" height="36" rx="6" fill="#1e2732"/><rect x="1240" y="705" width="175" height="15" fill="#efe9d2"/><rect x="1240" y="720" width="175" height="16" fill="#3a1c10"/>
<rect x="1185" y="688" width="45" height="46" fill="#a8501f"/><circle cx="1207" cy="711" r="14" fill="#d4d4d4"/><rect x="1423" y="688" width="45" height="46" fill="#a8501f"/><circle cx="1445" cy="711" r="14" fill="#d4d4d4"/>
<path d="M1085 45H1135V150H1085ZM1085 625H1135V735H1085" fill="#3c4250"/><path d="M1085 45L1130 60L1085 75L1130 90L1085 105L1130 120L1085 135L1130 150M1085 625L1130 640L1085 655L1130 670L1085 685L1130 700L1085 715L1130 730" stroke="#9a9aa0" stroke-width="2" fill="none"/>
<rect x="200" y="38" width="180" height="52" fill="#c9cacb"/><rect x="240" y="42" width="100" height="45" fill="#aaa"/>
<rect x="552" y="40" width="188" height="38" fill="#a18c70"/><rect x="580" y="52" width="130" height="8" fill="#222"/>
<rect x="517" y="133" width="182" height="120" fill="#807b76"/><circle cx="610" cy="193" r="44" fill="#6f7b80"/><circle cx="610" cy="193" r="17" fill="#111"/>
<rect x="545" y="262" width="258" height="88" rx="6" fill="#363a40"/><rect x="708" y="135" width="90" height="215" rx="6" fill="#363a40"/><rect x="705" y="285" width="70" height="38" fill="#b4c2a8"/>
<ellipse cx="480" cy="205" rx="46" ry="40" fill="#e2dfd0"/><rect x="460" y="190" width="34" height="28" fill="#c9746a"/>
<rect x="467" y="262" width="65" height="62" fill="#5e3c24"/><circle cx="513" cy="305" r="11" fill="#a88b2a"/>
<rect x="168" y="205" width="112" height="108" fill="#68411f"/><circle cx="224" cy="258" r="22" fill="#b0b8a4"/><g fill="#111"><rect x="198" y="170" width="52" height="35"/><rect x="198" y="313" width="52" height="35"/><rect x="136" y="235" width="32" height="50"/><rect x="280" y="235" width="32" height="50"/></g>
<rect x="505" y="478" width="242" height="96" fill="#e3e3e3"/><rect x="672" y="478" width="75" height="96" fill="#bcbcbc"/><rect x="565" y="518" width="112" height="50" fill="#b9b9b9"/>
<ellipse cx="585" cy="463" rx="26" ry="14" fill="#9c8e78"/><ellipse cx="666" cy="460" rx="26" ry="15" fill="#9c8e78"/>
<rect x="400" y="678" width="347" height="66" fill="#ececec"/><rect x="513" y="684" width="67" height="54" fill="#0e0e0e"/><circle cx="715" cy="712" r="15" fill="#8c7f72"/><rect x="755" y="668" width="85" height="75" fill="#8d8d8d"/>
<rect x="170" y="495" width="102" height="170" fill="#5f3a22"/><rect x="197" y="556" width="50" height="45" fill="#a0a0a0"/>
<g fill="#222"><rect x="198" y="468" width="48" height="28" rx="12"/><rect x="198" y="665" width="48" height="28" rx="12"/><rect x="140" y="520" width="30" height="42" rx="12"/><rect x="140" y="600" width="30" height="42" rx="12"/><rect x="272" y="520" width="30" height="42" rx="12"/><rect x="272" y="600" width="30" height="42" rx="12"/></g>
<g fill="#e6e1cc"><rect x="206" y="475" width="32" height="18"/><rect x="206" y="668" width="32" height="18"/><rect x="148" y="528" width="20" height="28"/><rect x="148" y="608" width="20" height="28"/><rect x="274" y="528" width="20" height="28"/><rect x="274" y="608" width="20" height="28"/></g>
<use href="#palm" transform="translate(85,67) scale(2.400)"/><use href="#palm" transform="translate(152,67) scale(2.400)"/><use href="#palm" transform="translate(348,367) scale(2.400)"/>
<g class="w"><rect x="392" y="32" width="8" height="375"/><rect x="52" y="402" width="348" height="7"/><rect x="845" y="32" width="9" height="352"/><rect x="1068" y="32" width="8" height="712"/><rect x="854" y="275" width="215" height="10"/><rect x="845" y="380" width="75" height="8"/><rect x="1070" y="380" width="420" height="12"/><rect x="845" y="500" width="8" height="245"/><rect x="958" y="492" width="110" height="8"/><rect x="1076" y="275" width="70" height="7"/><rect x="1076" y="494" width="70" height="7"/></g>
<g fill="none" stroke="#333" stroke-width="2"><path d="M1076 285A90 90 0 0 1 1166 375M1076 485A90 90 0 0 0 1166 395M905 285L940 330L930 380M905 380L905 330"/></g>
<rect x="50" y="750" width="252" height="20" fill="#fafbfd"/>
</g>
<!-- right plan lower -->
<g transform="translate(1130,600) scale(.3333,.4337)">
<rect x="65" y="-10" width="1358" height="1108" class="w"/>
<rect x="80" y="5" width="1330" height="328" fill="#6e6e70"/>
<rect x="80" y="5" width="1330" height="328" filter="url(#carpet)"/>
<rect x="637" y="8" width="235" height="222" fill="#c9cbcc"/><rect x="637" y="8" width="120" height="122" fill="#b6b7b9"/><rect x="760" y="150" width="95" height="80" fill="#d8d8d8"/><ellipse cx="690" cy="183" rx="32" ry="23" fill="#bcbcbc"/><rect x="637" y="160" width="30" height="60" fill="#f2f2f2"/><rect x="780" y="15" width="60" height="38" fill="#d8d8d8"/>
<path d="M760 60L805 105L760 130M855 145A105 85 0 0 0 752 230" stroke="#222" stroke-width="2" fill="none"/>
<rect x="80" y="342" width="1000" height="750" fill="#b07a50"/>
<polygon points="480,490 640,395 660,395 560,490" fill="#c48a5c" opacity=".6"/>
<rect x="430" y="495" width="200" height="225" fill="#000" opacity=".08"/><rect x="1020" y="495" width="68" height="155" fill="#000" opacity=".1"/>
<polygon points="480,735 640,720 480,900 470,905" fill="#000" opacity=".05"/><polygon points="320,1065 630,730 760,730 760,805 470,1080" fill="#000" opacity=".06"/>
<rect x="80" y="342" width="1000" height="750" filter="url(#grain)" opacity=".18"/>
<rect x="75" y="728" width="390" height="180" fill="#cfd1d2"/><rect x="75" y="728" width="125" height="180" fill="#b6b7b9"/><polygon points="205,835 300,728 440,728 440,760 350,835" fill="#f0f0f0"/><rect x="75" y="880" width="125" height="26" fill="#f0f0f0"/><ellipse cx="245" cy="865" rx="28" ry="25" fill="#bdbdbd"/><rect x="300" y="868" width="165" height="40" fill="#bdbdbd"/><rect x="252" y="730" width="78" height="14" fill="#9d9d9d"/>
<path d="M345 728A100 78 0 0 0 445 805V728" stroke="#222" stroke-width="2.500" fill="none"/><path d="M200 728H248L200 800Z" fill="none" stroke="#777" stroke-width="2"/>
<rect x="1082" y="345" width="328" height="378" fill="#cfcfcf"/><rect x="1205" y="345" width="115" height="250" fill="#e9e9e9"/><rect x="1082" y="345" width="122" height="258" fill="#b8b8b8"/><rect x="1082" y="490" width="122" height="113" fill="#dcdcdc"/><polygon points="1090,603 1210,603 1210,722 1090,722" fill="#fff"/><polygon points="1210,603 1350,455 1350,722 1210,722" fill="#e6e6e6"/><rect x="1262" y="520" width="60" height="200" fill="#fdfdfd"/>
<rect x="1308" y="632" width="92" height="86" fill="#8d8d8d"/><rect x="1335" y="488" width="62" height="56" fill="#0c0c0c"/><rect x="1128" y="448" width="58" height="95" fill="#bcbcbc"/><circle cx="1156" cy="520" r="20" fill="#ddd" stroke="#777"/>
<rect x="1097" y="730" width="320" height="362" fill="#6e4c36"/><rect x="1097" y="730" width="320" height="362" filter="url(#grain)" opacity=".45"/>
<rect x="70" y="1072" width="405" height="142" fill="#6e4c36"/><rect x="70" y="1072" width="405" height="142" filter="url(#grain)" opacity=".45"/>
<rect x="210" y="1082" width="110" height="48" fill="#c0ae90"/>
<ellipse cx="1320" cy="870" rx="65" ry="58" fill="#22201e" transform="rotate(-25 1320 870)"/><path d="M1257 870L1335 895L1290 920Q1262 905 1257 870Z" fill="#d6c477"/>
<ellipse cx="1320" cy="1005" rx="65" ry="55" fill="#22201e" transform="rotate(25 1320 1005)"/><path d="M1255 1000L1335 965L1265 1015Z" fill="#d6c477"/><ellipse cx="1243" cy="933" rx="32" ry="24" fill="#151515"/>
<use href="#palm" transform="translate(1140,768) scale(2.400,1.800)"/><use href="#palm" transform="translate(125,1110) scale(2.600,2)"/><use href="#palm" transform="translate(125,1172) scale(2.600,2)"/><use href="#palm" transform="translate(420,1110) scale(2.600,2)"/><use href="#palm" transform="translate(420,1172) scale(2.600,2)"/>
<rect x="90" y="92" width="72" height="145" fill="#1e2732"/><rect x="160" y="92" width="165" height="145" fill="#c0b8a6"/><rect x="88" y="43" width="55" height="42" fill="#a8501f"/><circle cx="112" cy="65" r="17" fill="#ccc"/><rect x="88" y="245" width="55" height="42" fill="#a8501f"/><circle cx="112" cy="267" r="17" fill="#ccc"/>
<rect x="1130" y="15" width="265" height="110" fill="#b08f65"/><rect x="1140" y="22" width="190" height="95" fill="#8c846f"/><rect x="1232" y="268" width="175" height="60" fill="#867b69"/><rect x="1302" y="285" width="32" height="24" fill="#f4f4f4"/><ellipse cx="1312" cy="248" rx="32" ry="16" fill="#22242a"/>
<rect x="90" y="452" width="55" height="258" fill="#552218"/><rect x="115" y="492" width="215" height="168" fill="#f5f5f2"/><rect x="220" y="488" width="110" height="180" rx="6" fill="#e1d8b8"/><rect x="110" y="505" width="45" height="65" fill="#ded5b3"/><rect x="110" y="580" width="45" height="65" fill="#ded5b3"/><ellipse cx="380" cy="575" rx="48" ry="58" fill="#f0ece1"/>
<rect x="92" y="350" width="85" height="66" fill="#5e3c24"/><ellipse cx="232" cy="392" rx="48" ry="38" fill="#bdb8a3"/><rect x="212" y="372" width="40" height="26" fill="#c9746a"/>
<rect x="786" y="435" width="116" height="206" fill="#5f3a22"/><rect x="815" y="518" width="55" height="38" fill="#a0a0a0"/>
<g fill="#222"><rect x="818" y="410" width="48" height="26" rx="10"/><rect x="818" y="640" width="48" height="30" rx="10"/><rect x="752" y="455" width="34" height="36" rx="10"/><rect x="752" y="518" width="34" height="36" rx="10"/><rect x="752" y="582" width="34" height="36" rx="10"/><rect x="902" y="455" width="34" height="36" rx="10"/><rect x="902" y="518" width="34" height="36" rx="10"/><rect x="902" y="582" width="34" height="36" rx="10"/></g>
<g fill="#e6e1cc"><rect x="826" y="416" width="32" height="18"/><rect x="826" y="645" width="32" height="20"/><rect x="760" y="461" width="24" height="24"/><rect x="760" y="524" width="24" height="24"/><rect x="760" y="588" width="24" height="24"/><rect x="904" y="461" width="24" height="24"/><rect x="904" y="524" width="24" height="24"/><rect x="904" y="588" width="24" height="24"/></g>
<ellipse cx="1065" cy="390" rx="16" ry="22" fill="#9c8e78"/><ellipse cx="1065" cy="452" rx="16" ry="22" fill="#9c8e78"/><ellipse cx="1062" cy="515" rx="20" ry="24" fill="#9c8e78"/>
<rect x="710" y="808" width="145" height="158" fill="#817c77"/><circle cx="784" cy="884" r="48" fill="#6f7b80"/><circle cx="784" cy="884" r="18" fill="#111"/>
<rect x="868" y="828" width="108" height="226" rx="6" fill="#36393f"/><rect x="722" y="975" width="255" height="76" rx="4" fill="#36393f"/><rect x="895" y="968" width="50" height="62" fill="#a9c2a6"/>
<ellipse cx="785" cy="772" rx="45" ry="38" fill="#e2dfd0"/><rect x="766" y="755" width="38" height="26" fill="#c9746a"/><rect x="874" y="746" width="86" height="64" fill="#5e3c24"/>
<rect x="484" y="748" width="50" height="162" fill="#b1987a"/><rect x="503" y="775" width="12" height="110" fill="#222"/>
<ellipse cx="528" cy="1052" rx="38" ry="26" fill="#c0c0c0"/>
<g class="w">
<rect x="75" y="333" width="560" height="9"/><rect x="742" y="333" width="350" height="9"/><rect x="628" y="320" width="8" height="22"/><rect x="626" y="440" width="10" height="280"/><rect x="76" y="716" width="405" height="10"/><rect x="65" y="908" width="415" height="10"/><rect x="466" y="716" width="14" height="215"/><rect x="550" y="440" width="84" height="8"/><rect x="552" y="448" width="4" height="270"/>
<rect x="630" y="8" width="8" height="225"/><rect x="868" y="8" width="10" height="225"/><rect x="550" y="228" width="205" height="7"/><rect x="868" y="228" width="90" height="7"/><rect x="520" y="320" width="110" height="5"/><rect x="878" y="320" width="110" height="5"/>
<rect x="1090" y="725" width="330" height="8"/><rect x="1090" y="725" width="8" height="370"/><rect x="205" y="980" width="7" height="90"/>
<rect x="65" y="1065" width="415" height="9"/><rect x="65" y="1214" width="415" height="7"/><rect x="65" y="1065" width="6" height="155"/><rect x="470" y="1050" width="10" height="170"/>
</g>
<rect x="650" y="1093" width="115" height="5" fill="#fafbfd"/><rect x="780" y="1093" width="105" height="5" fill="#fafbfd"/><rect x="68" y="130" width="8" height="85" fill="#fafbfd"/><rect x="1413" y="110" width="8" height="130" fill="#fafbfd"/><rect x="1413" y="400" width="8" height="230" fill="#fafbfd"/>
<g fill="none" stroke="#222" stroke-width="2"><path d="M520 322A110 85 0 0 1 628 238M988 322A110 85 0 0 0 878 238M212 980A110 85 0 0 1 322 1065M600 420L520 380"/></g>
<rect x="145" y="1219" width="255" height="275" fill="#90664b"/><polygon points="312,1270 400,1220 400,1494 312,1494" fill="#7c5740"/>
<path d="M145 1250H400M145 1300H400M145 1350H400M145 1400H400M145 1450H400" stroke="#5a4436" stroke-width="2"/><rect x="140" y="1219" width="7" height="280" class="w"/><rect x="396" y="1219" width="7" height="280" class="w"/>
<rect x="1172" y="1098" width="180" height="252" fill="#90664b"/><rect x="1262" y="1098" width="90" height="252" fill="#7c5740"/>
<path d="M1172 1140H1352M1172 1180H1352M1172 1225H1352M1172 1270H1352M1172 1310H1352" stroke="#5a4436" stroke-width="2"/><rect x="1168" y="1098" width="7" height="252" class="w"/><rect x="1348" y="1098" width="7" height="252" class="w"/>
</g>
<text x="1477" y="383" class="l" textLength="54" lengthAdjust="spacingAndGlyphs">BED 3</text><text x="1477" y="402" class="l" textLength="102" lengthAdjust="spacingAndGlyphs">3.0m x 3.2m</text>
<text x="1487" y="477" class="l" textLength="54" lengthAdjust="spacingAndGlyphs">BED 2</text><text x="1487" y="496" class="l" textLength="102" lengthAdjust="spacingAndGlyphs">3.0m x 3.3m</text>
<text x="1455" y="672" class="l" textLength="54" lengthAdjust="spacingAndGlyphs">BED 3</text><text x="1455" y="692" class="l" textLength="101" lengthAdjust="spacingAndGlyphs">3.5m x 3.3m</text>
<text x="1191" y="720" class="l" textLength="55" lengthAdjust="spacingAndGlyphs">BED 2</text><text x="1191" y="739" class="l" textLength="102" lengthAdjust="spacingAndGlyphs">3.6m x 3.3m</text>
<text x="1230" y="764" class="l" textLength="77" lengthAdjust="spacingAndGlyphs">MASTER</text><text x="1231" y="784" class="l" textLength="102" lengthAdjust="spacingAndGlyphs">3.6m x 3.8m</text>
<!-- stat icons -->
<use href="#bed" x="1791" y="338"/><text x="1855" y="349" font-size="31" fill="#6d6e71">3</text><use href="#shw" x="1919" y="338"/><text x="1960" y="349" font-size="31" fill="#6d6e71">2</text><use href="#crr" x="2017" y="338"/><text x="2076" y="349" font-size="31" fill="#6d6e71">2</text>
<use href="#bed" x="1796" y="628"/><text x="1859" y="639" font-size="31" fill="#6d6e71">3</text><use href="#shw" x="1925" y="628"/><text x="1965" y="639" font-size="31" fill="#6d6e71">2</text><use href="#crr" x="2022" y="628"/><text x="2081" y="639" font-size="31" fill="#6d6e71">1</text>
<use href="#bed" x="1791" y="1107"/><text x="1855" y="1118" font-size="31" fill="#6d6e71">3</text><use href="#shw" x="1919" y="1107"/><text x="1960" y="1118" font-size="31" fill="#6d6e71">2</text><use href="#crr" x="2017" y="1107"/><text x="2076" y="1118" font-size="31" fill="#6d6e71">2</text>
<text x="1940" y="583" font-size="50" font-weight="bold" fill="#6d6e71" textLength="156" lengthAdjust="spacingAndGlyphs">UNIT 2</text>
<text x="1945" y="1062" font-size="50" font-weight="bold" fill="#6d6e71" textLength="153" lengthAdjust="spacingAndGlyphs">UNIT 1</text>
<text x="1177" y="1334" font-size="39" fill="#77787b" textLength="370" lengthAdjust="spacingAndGlyphs">FIRST FLOOR PLAN</text>
<text x="1569" y="1594" font-size="31" fill="#6d6e71" textLength="207" lengthAdjust="spacingAndGlyphs" xml:space="preserve">SCALE  1 : 175</text>
<g fill="#6d6e71"><rect x="1571" y="1632" width="44" height="7"/><rect x="1615" y="1621" width="43" height="7"/><rect x="1658" y="1632" width="43" height="7"/><rect x="1701" y="1621" width="44" height="7"/><rect x="1745" y="1632" width="42" height="7"/><rect x="1787" y="1621" width="216" height="7"/><rect x="1571" y="1621" width="1" height="12"/><rect x="2003" y="1621" width="1" height="18"/></g>
<g font-size="14" fill="#8a8a8a"><text x="1571" y="1615">0m</text><text x="1613" y="1615">1m</text><text x="1787" y="1615">5m</text><text x="2001" y="1615">10m</text></g>
<circle cx="2092" cy="1603" r="33" fill="none" stroke="#58595b" stroke-width="3.500"/>
<path d="M2065 1613L2096 1603" stroke="#58595b" stroke-width="9" stroke-linecap="round"/>
</g>

<!-- canvas scrollbar -->
<rect x="2177" y="306" width="33" height="1345" fill="#fafbfd"/>
<rect x="2177" y="306" width="33" height="34" fill="#f3f3f3"/><rect x="2177" y="1617" width="33" height="34" fill="#f3f3f3"/>
<path d="M2187 328L2193 322L2199 328M2187 1630L2193 1636L2199 1630" fill="none" stroke="#333" stroke-width="2.400"/>
<rect x="2177" y="968" width="33" height="259" fill="#cbcbcb"/>
<!-- left rulers -->
<rect x="60" y="270" width="2150" height="36" fill="#f8f8f8"/>
<rect x="60" y="270" width="37" height="1415" fill="#f8f8f8"/>
<rect x="97" y="290" width="2113" height="16" fill="url(#hr)"/>
<rect x="80" y="306" width="16" height="1375" fill="url(#vr)"/>
<rect x="96" y="306" width="1" height="1345" fill="#b5b5b5"/><rect x="97" y="305" width="2113" height="1" fill="#b5b5b5"/>
<path d="M67 280H89M76 272V296" stroke="#333" stroke-width="1.600" stroke-dasharray="3 2.400" fill="none"/><path d="M76 281L88 298" stroke="#333" stroke-width="1.800"/><path d="M88 298L80 295L86 291Z" fill="#333"/>
<path d="M911 270V305" stroke="#222" stroke-width="1.500" stroke-dasharray="4 3"/>
<path d="M60 561H95" stroke="#222" stroke-width="1.500" stroke-dasharray="4 3"/>
<g class="r"><text x="147" y="290">20</text><text x="223" y="290">30</text><text x="298" y="290">40</text><text x="374" y="290">50</text><text x="449" y="290">60</text><text x="525" y="290">70</text><text x="601" y="290">80</text><text x="676" y="290">90</text><text x="752" y="290">100</text><text x="827" y="290">110</text><text x="903" y="290">120</text><text x="979" y="290">130</text><text x="1054" y="290">140</text><text x="1130" y="290">150</text><text x="1205" y="290">160</text><text x="1281" y="290">170</text><text x="1357" y="290">180</text><text x="1432" y="290">190</text><text x="1508" y="290">200</text><text x="1583" y="290">210</text><text x="1659" y="290">220</text><text x="1735" y="290">230</text><text x="1810" y="290">240</text><text x="1886" y="290">250</text><text x="1961" y="290">260</text><text x="2037" y="290">270</text></g>
<text x="2118" y="289" font-size="17" fill="#8a8a8a" textLength="87" lengthAdjust="spacingAndGlyphs">millimeters</text>
<g class="r">
<text transform="translate(81,358) rotate(-90)">210</text><text transform="translate(81,434) rotate(-90)">200</text><text transform="translate(81,509) rotate(-90)">190</text><text transform="translate(81,585) rotate(-90)">180</text><text transform="translate(81,661) rotate(-90)">170</text><text transform="translate(81,736) rotate(-90)">160</text><text transform="translate(81,812) rotate(-90)">150</text><text transform="translate(81,888) rotate(-90)">140</text><text transform="translate(81,964) rotate(-90)">130</text><text transform="translate(81,1039) rotate(-90)">120</text><text transform="translate(81,1115) rotate(-90)">110</text><text transform="translate(81,1191) rotate(-90)">100</text><text transform="translate(81,1266) rotate(-90)">90</text><text transform="translate(81,1342) rotate(-90)">80</text><text transform="translate(81,1418) rotate(-90)">70</text><text transform="translate(81,1494) rotate(-90)">60</text><text transform="translate(81,1569) rotate(-90)">50</text>
</g>
<!-- left tool column -->
<rect x="0" y="228" width="58" height="1498" fill="#f3f3f3"/><rect x="58" y="228" width="2.500" height="1498" fill="#d6d6d6"/>
<g fill="#d4d4d4"><rect x="7" y="343" width="46" height="1.500"/><rect x="7" y="462" width="46" height="1.500"/><rect x="7" y="743" width="46" height="1.500"/><rect x="7" y="808" width="46" height="1.500"/><rect x="7" y="928" width="46" height="1.500"/><rect x="7" y="1047" width="46" height="1.500"/><rect x="7" y="1166" width="46" height="1.500"/></g>
<rect x="8" y="939" width="44" height="44" fill="#fff" stroke="#aaa" stroke-width="2"/>
<path class="d" d="M24 242L39 266L32 265L37 276L33 278L29 267L24 272Z"/>
<use href="#tri" x="41" y="278"/><use href="#tri" x="41" y="331"/><use href="#tri" x="41" y="396"/><use href="#tri" x="41" y="451"/><use href="#tri" x="41" y="516"/><use href="#tri" x="41" y="570"/><use href="#tri" x="41" y="625"/><use href="#tri" x="41" y="679"/><use href="#tri" x="41" y="733"/><use href="#tri" x="41" y="798"/><use href="#tri" x="41" y="863"/><use href="#tri" x="41" y="917"/><use href="#tri" x="41" y="982"/><use href="#tri" x="41" y="1102"/>
<path class="s" d="M27 299L20 306V313L30 325"/><rect x="18" y="304" width="7" height="8" fill="#fff" stroke="#333" stroke-width="2"/><path class="d" d="M32 316L46 322L38 326Z"/>
<path d="M14 371H36V390M46 383H24V361" fill="none" stroke="#333" stroke-width="5"/>
<ellipse class="s" cx="28" cy="427" rx="13" ry="11" stroke-width="2.600"/><path d="M38 435L47 447" stroke="#333" stroke-width="4.500"/>
<path class="t" d="M14 486H27M21 480V492"/><path class="s" d="M21 505V510H25C26 502 29 504 29 510C31 504 33 504 34 509C36 504 38 504 39 508C41 504 43 504 45 507"/>
<path class="s" d="M33 538C25 533 16 534 15 540C14 546 24 546 27 552C30 560 44 562 45 552C46 547 40 546 36 549" stroke-width="3"/>
<rect class="s" x="15" y="589" width="31" height="30"/>
<ellipse class="s" cx="30" cy="658" rx="15" ry="14"/>
<path class="s" d="M15 712L24 697H38L46 712L38 727H24Z"/>
<path d="M15 793L30 762L45 793M21 783H39" fill="none" stroke="#333" stroke-width="4"/>
<path d="M15 851L44 829M15 845L19 856M40 826L45 833" stroke="#333" stroke-width="1.800" fill="none"/>
<path d="M20 883L44 908" stroke="#333" stroke-width="2"/>
<rect x="14" y="880" width="13" height="9" fill="#e86c0a" stroke="#333" stroke-width="1.500"/><rect x="36" y="903" width="13" height="9" fill="#e86c0a" stroke="#333" stroke-width="1.500"/>
<rect class="s" x="15" y="946" width="24" height="20" stroke-width="3"/><path class="d" d="M41 948H46V977H22V971H41Z"/>
<rect x="14" y="1000" width="32" height="32" fill="#333"/><path d="M20 1004h6v6h-6zM32 1004h6v6h-6zM14 1010h6v6h-6zM26 1010h6v6h-6zM38 1010h6v6h-6zM20 1016h6v6h-6zM32 1016h6v6h-6zM14 1022h6v6h-6zM26 1022h6v6h-6zM38 1022h6v6h-6z" fill="#f3f3f3"/>
<path d="M16 1094L36 1078" stroke="#333" stroke-width="6"/><path d="M16 1094L28 1084" stroke="#e86c0a" stroke-width="3.500"/><path class="d" d="M34 1080L40 1072H46L46 1078L40 1084Z"/>
<path class="s" d="M15 1131L30 1120L46 1131L31 1142Z" stroke-width="3"/><path d="M22 1131H39L30 1138Z" fill="#e80b0b"/><path d="M38 1152L50 1140V1152Z" fill="#e80b0b"/>
<path d="M30 1198V1222M18 1210H43" stroke="#bdbdbd" stroke-width="4"/>
<!-- page nav -->
<rect x="97" y="1651" width="1058" height="34" fill="#f3f3f3"/><rect x="97" y="1651" width="1058" height="2" fill="#8a8a8a"/>
<rect x="1155" y="1652" width="35" height="33" fill="#f0f0f0"/>
<rect x="1190" y="1652" width="952" height="33" fill="#fff"/>
<rect x="1468" y="1652" width="404" height="32" fill="#cccccc"/>
<rect x="2142" y="1652" width="34" height="33" fill="#f0f0f0"/><rect x="2176" y="1652" width="34" height="33" fill="#fff"/>
<path d="M1174 1661L1169 1669L1174 1677M2156 1661L2161 1669L2156 1677" fill="none" stroke="#333" stroke-width="2"/>
<circle cx="2188" cy="1667" r="10" fill="#fff" stroke="#333" stroke-width="2"/><path d="M2188 1662V1672M2183 1667H2193" stroke="#333" stroke-width="2" stroke-dasharray="2 2"/><path d="M2196 1674L2204 1682" stroke="#333" stroke-width="3"/>
<path class="t" d="M105 1677V1662L110 1658H120V1677Z"/><path class="t" d="M112 1664V1672M108 1668H116"/>
<path d="M139 1658V1678" stroke="#c2c2c2" stroke-width="2"/><path class="dg" d="M157 1658V1678L143 1668ZM187 1658V1678L171 1668ZM286 1658V1678L302 1668ZM316 1658V1678L330 1668Z"/><path d="M334 1658V1678" stroke="#c2c2c2" stroke-width="2"/>
<text x="203" y="1677" font-size="22" fill="#b4b4b4" textLength="66" lengthAdjust="spacingAndGlyphs">1 of 1</text>
<path class="t" d="M351 1677V1662L356 1658H366V1677Z"/><path class="t" d="M358 1664V1672M354 1668H362"/>
<polygon points="394,1652 493,1652 484,1683 403,1683" fill="#fff" stroke="#8a8a8a" stroke-width="1.500"/>
<text x="409" y="1677" font-size="22" textLength="64" lengthAdjust="spacingAndGlyphs">Page 1</text>
<path d="M1141 1658V1682M1149 1658V1682" stroke="#bbb" stroke-width="2" stroke-dasharray="2 3"/>
<!-- palette bottom -->
<rect x="60" y="1685" width="2155" height="3.500" fill="#e0e0e0"/>
<rect x="60" y="1688" width="2155" height="38" fill="#f3f3f3"/>
<path d="M67 1692V1718M73 1692V1718" stroke="#bbb" stroke-width="2" stroke-dasharray="2 3"/>
<path d="M91 1698L98 1705L91 1712Z" fill="#666"/>
<path d="M122 1716L138 1694" stroke="#333" stroke-width="5"/><path d="M122 1716L131 1703" stroke="#e86c0a" stroke-width="3"/><path class="d" d="M136 1696L141 1689L147 1692L143 1700Z"/>
<path d="M176 1693L170 1705L176 1716" fill="none" stroke="#d0d0d0" stroke-width="4"/>
<g>
<rect x="187" y="1689" width="33" height="33" fill="#fff"/><path d="M192 1718L215 1693" stroke="#e01b22" stroke-width="2.400"/>
<rect x="220" y="1689" width="33" height="33" fill="#c9cacc"/><rect x="253" y="1689" width="33" height="33" fill="#ee1c25"/><rect x="286" y="1689" width="33" height="33" fill="#929497"/><rect x="319" y="1689" width="33" height="33" fill="#3e3f41"/><rect x="352" y="1689" width="33" height="33" fill="#808285"/><rect x="385" y="1689" width="33" height="33" fill="#58595b"/><rect x="418" y="1689" width="33" height="33" fill="#e6e7e8"/><rect x="451" y="1689" width="33" height="33" fill="#b5b6b7"/><rect x="484" y="1689" width="33" height="33" fill="#b7b8b9"/><rect x="517" y="1689" width="33" height="33" fill="#ffffff"/><rect x="550" y="1689" width="33" height="33" fill="#a6a8ab"/><rect x="583" y="1689" width="33" height="33" fill="#a7a8ab"/><rect x="616" y="1689" width="33" height="33" fill="#6d6e70"/><rect x="649" y="1689" width="33" height="33" fill="#524c6d"/><rect x="682" y="1689" width="33" height="33" fill="#455d87"/><rect x="715" y="1689" width="33" height="33" fill="#dcdedd"/><rect x="748" y="1689" width="33" height="33" fill="#4a4b4d"/><rect x="781" y="1689" width="33" height="33" fill="#b5b7b8"/><rect x="814" y="1689" width="33" height="33" fill="#8ed4f6"/><rect x="847" y="1689" width="33" height="33" fill="#abdff9"/><rect x="880" y="1689" width="33" height="33" fill="#b8e3fa"/><rect x="913" y="1689" width="33" height="33" fill="#53a278"/><rect x="946" y="1689" width="33" height="33" fill="#9bd1ab"/><rect x="979" y="1689" width="33" height="33" fill="#efefef"/><rect x="1012" y="1689" width="33" height="33" fill="#3a3b3d"/><rect x="1045" y="1689" width="33" height="33" fill="#7bbfe0"/><rect x="1078" y="1689" width="33" height="33" fill="#a81c22"/><rect x="1111" y="1689" width="33" height="33" fill="#adb0b9"/><rect x="1144" y="1689" width="33" height="33" fill="#cb3634"/><rect x="1177" y="1689" width="33" height="33" fill="#2a2c2c"/>
<rect x="1210" y="1689" width="33" height="33" fill="#d0d3d9"/><rect x="1243" y="1689" width="33" height="33" fill="#9a9a9a"/><rect x="1276" y="1689" width="33" height="33" fill="#c91e25"/><rect x="1309" y="1689" width="33" height="33" fill="#816a52"/><rect x="1342" y="1689" width="33" height="33" fill="#231f20"/><rect x="1375" y="1689" width="33" height="33" fill="#d1d3d4"/><rect x="1408" y="1689" width="33" height="33" fill="#11416e"/><rect x="1441" y="1689" width="33" height="33" fill="#03264a"/><rect x="1474" y="1689" width="33" height="33" fill="#12345a"/><rect x="1507" y="1689" width="33" height="33" fill="#12345a"/><rect x="1540" y="1689" width="33" height="33" fill="#eeeff1"/><rect x="1573" y="1689" width="33" height="33" fill="#f8f9fb"/><rect x="1606" y="1689" width="33" height="33" fill="#0697e0"/><rect x="1639" y="1689" width="33" height="33" fill="#1a2f60"/><rect x="1672" y="1689" width="33" height="33" fill="#102256"/><rect x="1705" y="1689" width="33" height="33" fill="#2f4a70"/><rect x="1738" y="1689" width="33" height="33" fill="#2c3e5c"/><rect x="1771" y="1689" width="33" height="33" fill="#153358"/><rect x="1804" y="1689" width="33" height="33" fill="#183a60"/><rect x="1837" y="1689" width="33" height="33" fill="#0c2645"/><rect x="1870" y="1689" width="33" height="33" fill="#0a2044"/><rect x="1903" y="1689" width="33" height="33" fill="#07264b"/><rect x="1936" y="1689" width="33" height="33" fill="#677788"/><rect x="1969" y="1689" width="33" height="33" fill="#748698"/><rect x="2002" y="1689" width="33" height="33" fill="#405260"/><rect x="2035" y="1689" width="33" height="33" fill="#6f6f71"/><rect x="2068" y="1689" width="33" height="33" fill="#a3a4a5"/><rect x="2101" y="1689" width="29" height="33" fill="#6a6a6b"/>
<rect x="1509" y="1691" width="29" height="29" fill="none" stroke="#4d4d4d" stroke-width="4"/>
<rect x="187" y="1689" width="1943" height="33" fill="none" stroke="#555" stroke-width="1.500"/>
</g>
<path d="M2138 1693L2151 1705L2138 1717" fill="none" stroke="#d0d0d0" stroke-width="4"/>
<path d="M2171 1696L2178 1705L2171 1714M2180 1696L2187 1705L2180 1714" fill="none" stroke="#c4c4c4" stroke-width="2.400"/>
<!-- docker -->
<rect x="2210" y="228" width="5" height="1498" fill="#fff"/><rect x="2211" y="228" width="3" height="1498" fill="#e6e6e6"/>
<rect x="2215" y="228" width="585" height="44" fill="#e8e8e8"/><rect x="2215" y="272" width="585" height="2.500" fill="#a9a9a9"/>
<rect x="2799" y="228" width="41" height="46" fill="#e8e8e8"/>
<text x="2227" y="259" font-size="23" textLength="73" lengthAdjust="spacingAndGlyphs">Objects</text>
<path class="dg" d="M2768 241V262L2778 251.500ZM2779 241V262L2789 251.500Z"/>
<path d="M2808 241L2826 262M2826 241L2808 262" stroke="#bdbdbd" stroke-width="4"/>
<rect x="2215" y="274" width="582" height="120" fill="#f3f3f3"/>
<rect x="2217" y="288" width="577" height="44" fill="#fff" stroke="#a9a9a9" stroke-width="2"/>
<text x="2225" y="319" font-size="22" fill="#666" textLength="64" lengthAdjust="spacingAndGlyphs">Search</text>
<rect x="2217" y="342" width="44" height="44" fill="#f3f3f3" stroke="#a9a9a9" stroke-width="2"/>
<path class="s" d="M2224 379V358L2234 349H2250V358M2246 379H2224"/><path d="M2241 360L2253 367L2241 374L2229 367Z" fill="#fff" stroke="#333" stroke-width="2"/><path class="d" d="M2233 372L2241 378L2249 372L2254 376L2241 384L2228 376Z"/>
<use href="#lay" x="2293" y="362"/>
<path class="s" d="M2334 379V356L2344 349H2358V379Z"/>
<text x="2379" y="373" font-size="22" font-weight="bold" fill="#111" textLength="67" lengthAdjust="spacingAndGlyphs">Page 1</text>
<text x="2482" y="373" font-size="22" textLength="154" lengthAdjust="spacingAndGlyphs">U3 Plan - Land...</text>
<use href="#gear" x="2773" y="364"/><path d="M2784 385L2794 375V385Z" fill="#8c8c8c"/>
<rect x="2215" y="394" width="548" height="1284" fill="#fff"/>
<rect x="2763" y="394" width="33" height="1284" fill="#f3f3f3"/>
<rect x="2763" y="394" width="33" height="61" fill="#f7f7f7"/>
<rect x="2763" y="455" width="33" height="510" fill="#cacaca"/>
<path d="M2774 417L2780 411L2786 417M2774 1657L2780 1663L2786 1657" fill="none" stroke="#333" stroke-width="2.400"/>
<rect x="2797" y="272" width="2.600" height="1453" fill="#1ba1e2"/>
<rect x="2800" y="274" width="40" height="1452" fill="#e8e8e8"/>
<rect x="2800" y="274" width="40" height="143" fill="#d6d6d6"/><rect x="2800" y="420" width="40" height="194" fill="#d6d6d6"/><rect x="2800" y="614" width="40" height="176" fill="#cce4ff"/>
<path class="d" d="M2804 284L2817 300L2811 300L2815 310L2811 311L2806 302L2803 305Z"/>
<text x="2820" y="298" font-size="22" fill="#333">?</text>
<path class="s" d="M2805 440L2814 431L2824 440L2814 450Z"/><path d="M2809 440L2819 440L2814 445Z" fill="#e86c0a"/><path d="M2827 441V456M2834 441V456" stroke="#333" stroke-width="2"/><path class="t" d="M2808 452L2814 457L2820 452"/>
<path d="M2820 625L2835 634L2820 643L2805 634Z" fill="none" stroke="#333" stroke-width="2.200"/><path class="d" d="M2812 640L2820 645L2828 640L2834 643L2820 654L2806 643Z"/>
<text transform="translate(2810,325) rotate(90)" font-size="22" textLength="48" lengthAdjust="spacingAndGlyphs">Hints</text>
<text transform="translate(2810,472) rotate(90)" font-size="22" textLength="98" lengthAdjust="spacingAndGlyphs">Properties</text>
<text transform="translate(2810,669) rotate(90)" font-size="22" textLength="72" lengthAdjust="spacingAndGlyphs">Objects</text>
<path d="M2819 801V825M2807 813H2831" stroke="#bdbdbd" stroke-width="4"/>
<!-- rows -->
<g clip-path="url(#lst)">
<g fill="#ddd"><rect x="2216" y="439" width="546" height="2.400"/><rect x="2216" y="491" width="546" height="2.400"/><rect x="2216" y="543" width="546" height="2.400"/><rect x="2216" y="699" width="546" height="2.400"/></g>
<g font-size="22">
<use href="#ar" x="2232" y="413"/><use href="#lay" x="2278" y="413"/><text x="2341" y="422" textLength="98" lengthAdjust="spacingAndGlyphs">Title Block</text>
<use href="#ar" x="2232" y="465"/><use href="#lay" x="2278" y="465"/><text x="2341" y="474" textLength="180" lengthAdjust="spacingAndGlyphs">U3 Plan - Plan Text</text>
<use href="#ar" x="2232" y="517"/><use href="#lay" x="2278" y="517"/><text x="2341" y="526" textLength="144" lengthAdjust="spacingAndGlyphs">U3 Plan - Walls</text>
<path d="M2230 563H2246L2238 574Z" fill="#1a1a1a"/><use href="#lay" x="2278" y="569"/><text x="2341" y="578" font-weight="bold" fill="#111" textLength="229" lengthAdjust="spacingAndGlyphs">U3 Plan - Landscaping</text>
<path d="M2230 719H2246L2238 730Z" fill="#1a1a1a"/><use href="#lay" x="2278" y="725"/><text x="2341" y="734" textLength="263" xml:space="preserve" lengthAdjust="spacingAndGlyphs">U3 Plan - Windows   Doors</text>
<g fill="#111"><rect x="2742" y="395" width="8" height="36" rx="4"/><rect x="2742" y="447" width="8" height="36" rx="4"/><rect x="2742" y="499" width="8" height="36" rx="4"/><rect x="2742" y="551" width="8" height="36" rx="4"/><rect x="2742" y="707" width="8" height="36" rx="4"/></g>
<rect x="2673" y="413" width="18" height="13" fill="#333"/><path class="s" d="M2677 413V407A5 5 0 0 1 2687 407V413"/>
<use href="#ar" x="2250" y="621"/><use href="#ar" x="2250" y="674"/><use href="#ar" x="2250" y="777"/><use href="#ar" x="2250" y="830"/><use href="#ar" x="2250" y="933"/><use href="#ar" x="2250" y="1245"/><use href="#ar" x="2250" y="1297"/><use href="#ar" x="2250" y="1453"/><use href="#ar" x="2250" y="1558"/>
<g transform="translate(2296,621)"><use href="#palm" transform="scale(.9)"/></g><g transform="translate(2296,674)"><use href="#palm" transform="scale(.95)"/></g>
<text x="2359" y="630" textLength="183" lengthAdjust="spacingAndGlyphs">Group of 2 Objects</text>
<text x="2359" y="683" textLength="183" lengthAdjust="spacingAndGlyphs">Group of 2 Objects</text>
<text x="2359" y="786" textLength="183" lengthAdjust="spacingAndGlyphs">Group of 2 Objects</text>
<text x="2359" y="839" textLength="183" lengthAdjust="spacingAndGlyphs">Group of 2 Objects</text>
<text x="2359" y="890" textLength="56" lengthAdjust="spacingAndGlyphs">Curve</text>
<text x="2359" y="942" textLength="183" lengthAdjust="spacingAndGlyphs">Group of 2 Objects</text>
<text x="2359" y="994" textLength="56" lengthAdjust="spacingAndGlyphs">Curve</text>
<text x="2359" y="1046" textLength="93" lengthAdjust="spacingAndGlyphs">Rectangle</text>
<text x="2359" y="1098" textLength="93" lengthAdjust="spacingAndGlyphs">Rectangle</text>
<text x="2359" y="1150" textLength="56" lengthAdjust="spacingAndGlyphs">Curve</text>
<text x="2359" y="1202" textLength="93" lengthAdjust="spacingAndGlyphs">Rectangle</text>
<text x="2359" y="1254" textLength="183" lengthAdjust="spacingAndGlyphs">Group of 2 Objects</text>
<text x="2359" y="1306" textLength="183" lengthAdjust="spacingAndGlyphs">Group of 2 Objects</text>
<text x="2359" y="1358" textLength="56" lengthAdjust="spacingAndGlyphs">Curve</text>
<text x="2359" y="1410" textLength="56" lengthAdjust="spacingAndGlyphs">Curve</text>
<text x="2359" y="1462" textLength="183" lengthAdjust="spacingAndGlyphs">Group of 2 Objects</text>
<text x="2359" y="1514" textLength="56" lengthAdjust="spacingAndGlyphs">Curve</text>
<text x="2359" y="1566" textLength="183" lengthAdjust="spacingAndGlyphs">Group of 2 Objects</text>
<text x="2359" y="1618" textLength="56" lengthAdjust="spacingAndGlyphs">Curve</text>
<text x="2359" y="1670" textLength="56" lengthAdjust="spacingAndGlyphs">Curve</text>
</g>
<g fill="none" stroke="#555" stroke-width="1.400">
<path d="M2296 757V797M2295 785L2299 775M2296 810V850M2295 825L2299 815"/>
<path d="M2296 862V902M2296 862L2306 875"/>
<path d="M2306 912L2286 954" stroke-width="2.400"/>
<path d="M2276 986H2317M2296 1122V1162M2276 1350H2317M2296 1381V1421M2276 1506H2317M2276 1558H2317M2276 1609H2317M2276 1611L2293 1621M2276 1662H2317"/>
<path d="M2316 1226A42 40 0 0 1 2277 1265M2277 1277A42 40 0 0 1 2316 1315"/>
<path d="M2277 1473A40 40 0 0 1 2316 1433"/>
</g>
<g fill="#4a4a4a"><rect x="2276" y="1225" width="41" height="3"/><rect x="2276" y="1035" width="41" height="7"/><rect x="2276" y="1086" width="41" height="7"/><rect x="2292" y="1173" width="8" height="41"/><rect x="2276" y="1314" width="41" height="3"/><rect x="2276" y="1469" width="41" height="3"/><rect x="2289" y="1557" width="14" height="2.500"/></g>
</g>
<!-- docker footer -->
<rect x="2215" y="1678" width="582" height="48" fill="#f3f3f3"/>
<path d="M2239 1687L2224 1696L2239 1705" fill="none" stroke="#333" stroke-width="2.400"/><path class="d" d="M2239 1701L2256 1710L2239 1720L2223 1710Z"/><rect x="2243" y="1686" width="13" height="13" fill="#0a9c3c"/><path d="M2249.500 1688V1697M2245 1692.500H2254" stroke="#fff" stroke-width="2"/>
<path class="s" d="M2293 1687L2278 1697L2293 1705M2293 1696L2278 1704L2293 1713L2308 1704M2280 1710L2293 1718L2306 1710"/><rect x="2296" y="1686" width="13" height="13" fill="#0a9c3c"/><path d="M2302.500 1688V1697M2298 1692.500H2307" stroke="#fff" stroke-width="2"/><path d="M2304 1722L2314 1712V1722Z" fill="#8c8c8c"/>
<text x="2331" y="1716" font-size="26" font-style="italic" font-family="Liberation Serif,serif" fill="#bcbcbc">fx</text><rect x="2350" y="1686" width="13" height="13" fill="#c2c2c2"/><path d="M2356.500 1688V1697M2352 1692.500H2361" stroke="#f3f3f3" stroke-width="2"/>
<path class="dg" d="M2386 1690H2415V1694H2386ZM2391 1696H2411L2409 1718H2393Z"/><path d="M2396 1699V1715M2401 1699V1715M2406 1699V1715" stroke="#f3f3f3" stroke-width="1.500"/>
<path d="M2557 1686V1719M2672 1697V1719M2785 1697V1719M2557 1699H2785M2557 1704H2785" stroke="#bbb" stroke-width="2"/><path d="M2672 1697V1687" stroke="#bbb" stroke-width="2"/>
<rect x="2622" y="1682" width="11" height="40" fill="#e8e8e8" stroke="#bbb" stroke-width="2"/>
<!-- right palette -->
<rect x="2840" y="228" width="40" height="1498" fill="#f3f3f3"/><rect x="2840" y="228" width="2.500" height="1498" fill="#d6d6d6"/>
<path d="M2846 234H2872M2846 240H2872" stroke="#bbb" stroke-width="2" stroke-dasharray="2 3"/>
<path d="M2856 254L2863 261L2856 269Z" fill="#666"/>
<path d="M2849 311L2866 297" stroke="#c4c4c4" stroke-width="6"/><path d="M2864 297L2871 291L2873 296L2868 302Z" fill="#c4c4c4"/>
<path d="M2849 344L2860 333L2871 344" fill="none" stroke="#d0d0d0" stroke-width="5"/>
<g>
<rect x="2843" y="355" width="33" height="33" fill="#fff"/><path d="M2849 383L2870 361" stroke="#e01b22" stroke-width="2"/>
<rect x="2843" y="388" width="33" height="33" fill="#231f20"/><rect x="2843" y="421" width="33" height="33" fill="#414042"/><rect x="2843" y="454" width="33" height="33" fill="#58595b"/><rect x="2843" y="487" width="33" height="33" fill="#6d6e71"/><rect x="2843" y="520" width="33" height="33" fill="#808285"/><rect x="2843" y="553" width="33" height="33" fill="#939598"/><rect x="2843" y="586" width="33" height="33" fill="#a7a9ac"/><rect x="2843" y="619" width="33" height="33" fill="#bcbec0"/><rect x="2843" y="652" width="33" height="33" fill="#d1d3d4"/><rect x="2843" y="685" width="33" height="33" fill="#e6e7e8"/><rect x="2843" y="718" width="33" height="33" fill="#ffffff"/><rect x="2843" y="751" width="33" height="33" fill="#2e3192"/><rect x="2843" y="784" width="33" height="33" fill="#00aeef"/><rect x="2843" y="817" width="33" height="33" fill="#00a651"/><rect x="2843" y="850" width="33" height="33" fill="#fff200"/><rect x="2843" y="883" width="33" height="33" fill="#ed1c24"/><rect x="2843" y="916" width="33" height="33" fill="#ec008c"/><rect x="2843" y="949" width="33" height="33" fill="#a54a8a"/><rect x="2843" y="982" width="33" height="33" fill="#f58220"/><rect x="2843" y="1015" width="33" height="33" fill="#f9a9ab"/><rect x="2843" y="1048" width="33" height="33" fill="#7e6b66"/><rect x="2843" y="1081" width="33" height="33" fill="#c5c3e0"/><rect x="2843" y="1114" width="33" height="33" fill="#9a96c6"/><rect x="2843" y="1147" width="33" height="33" fill="#6e8cc5"/><rect x="2843" y="1180" width="33" height="33" fill="#7670b0"/><rect x="2843" y="1213" width="33" height="33" fill="#7f7ca5"/><rect x="2843" y="1246" width="33" height="33" fill="#4a6189"/><rect x="2843" y="1279" width="33" height="33" fill="#4f4a6a"/><rect x="2843" y="1312" width="33" height="33" fill="#5f7b99"/><rect x="2843" y="1345" width="33" height="33" fill="#0398dc"/><rect x="2843" y="1378" width="33" height="33" fill="#8bd6f7"/><rect x="2843" y="1411" width="33" height="33" fill="#a4c2d5"/><rect x="2843" y="1444" width="33" height="33" fill="#7f9bac"/><rect x="2843" y="1477" width="33" height="33" fill="#5e7380"/><rect x="2843" y="1510" width="33" height="33" fill="#415059"/><rect x="2843" y="1543" width="33" height="33" fill="#456c6c"/><rect x="2843" y="1576" width="33" height="33" fill="#3a8470"/><rect x="2843" y="1609" width="33" height="36" fill="#5c8f8a"/>
<path d="M2843 355V1645M2876 355V1645" stroke="#555" stroke-width="1.200"/>
</g>
<path d="M2849 1656L2860 1667L2871 1656" fill="none" stroke="#d0d0d0" stroke-width="5"/>
<path d="M2851 1689L2859 1696L2851 1704M2861 1689L2869 1696L2861 1704" fill="none" stroke="#c4c4c4" stroke-width="2.400"/>
<!-- status -->
<rect y="1726" width="2880" height="2.500" fill="#d9d9d9"/>
<rect y="1728" width="2880" height="70" fill="#f3f3f3"/>
<rect y="1798" width="2880" height="2" fill="#1e1e1e"/><rect x="1370" y="1798" width="96" height="2" fill="#4a4a4a"/>
<use href="#gear" transform="translate(36,1764) scale(1.100)"/><path d="M47 1782L56 1773V1782Z" fill="#8c8c8c"/>
<text x="67" y="1771" font-size="22" textLength="554" lengthAdjust="spacingAndGlyphs">Click+drag from center of an object creates a flat shadow</text>
<path d="M1934 1747L1949 1764L1934 1778L1920 1764Z" fill="none" stroke="#333" stroke-width="3"/><path d="M1926 1762H1941L1934 1770Z" fill="#e80b0b"/><path d="M1943 1778L1950 1763V1778Z" fill="#e80b0b"/>
<rect x="1957" y="1742" width="40" height="41" fill="#fff" stroke="#b5b5b5" stroke-width="2"/><path d="M1958 1782L1996 1743" stroke="#cf1b22" stroke-width="2.400"/>
<text x="2005" y="1771" font-size="23" textLength="51" lengthAdjust="spacingAndGlyphs">None</text>
<path class="s" d="M2337 1747L2330 1762L2334 1770H2340L2344 1762Z" stroke-width="2"/><rect x="2333" y="1771" width="8" height="8" fill="none" stroke="#333" stroke-width="2"/>
<rect x="2354" y="1742" width="41" height="41" fill="#231f20" stroke="#aaa" stroke-width="2"/>
<text x="2402" y="1771" font-size="22" textLength="169" lengthAdjust="spacingAndGlyphs">C:0 M:0 Y:0 K:100</text>
<text x="2584" y="1771" font-size="22" textLength="72" lengthAdjust="spacingAndGlyphs">Hairline</text>
<rect x="2810" y="1738" width="1.500" height="48" fill="#d9d9d9"/>
<rect x="2829" y="1747" width="31" height="24" fill="#00a0e4" stroke="#333" stroke-width="2"/><rect x="2830" y="1748" width="29" height="11" fill="#ee1c25"/><circle cx="2844" cy="1759" r="4" fill="#fff" stroke="#333" stroke-width="1.500"/><path d="M2833 1778H2856M2844 1771V1778" stroke="#333" stroke-width="2"/>
</svg>
</body></html>
